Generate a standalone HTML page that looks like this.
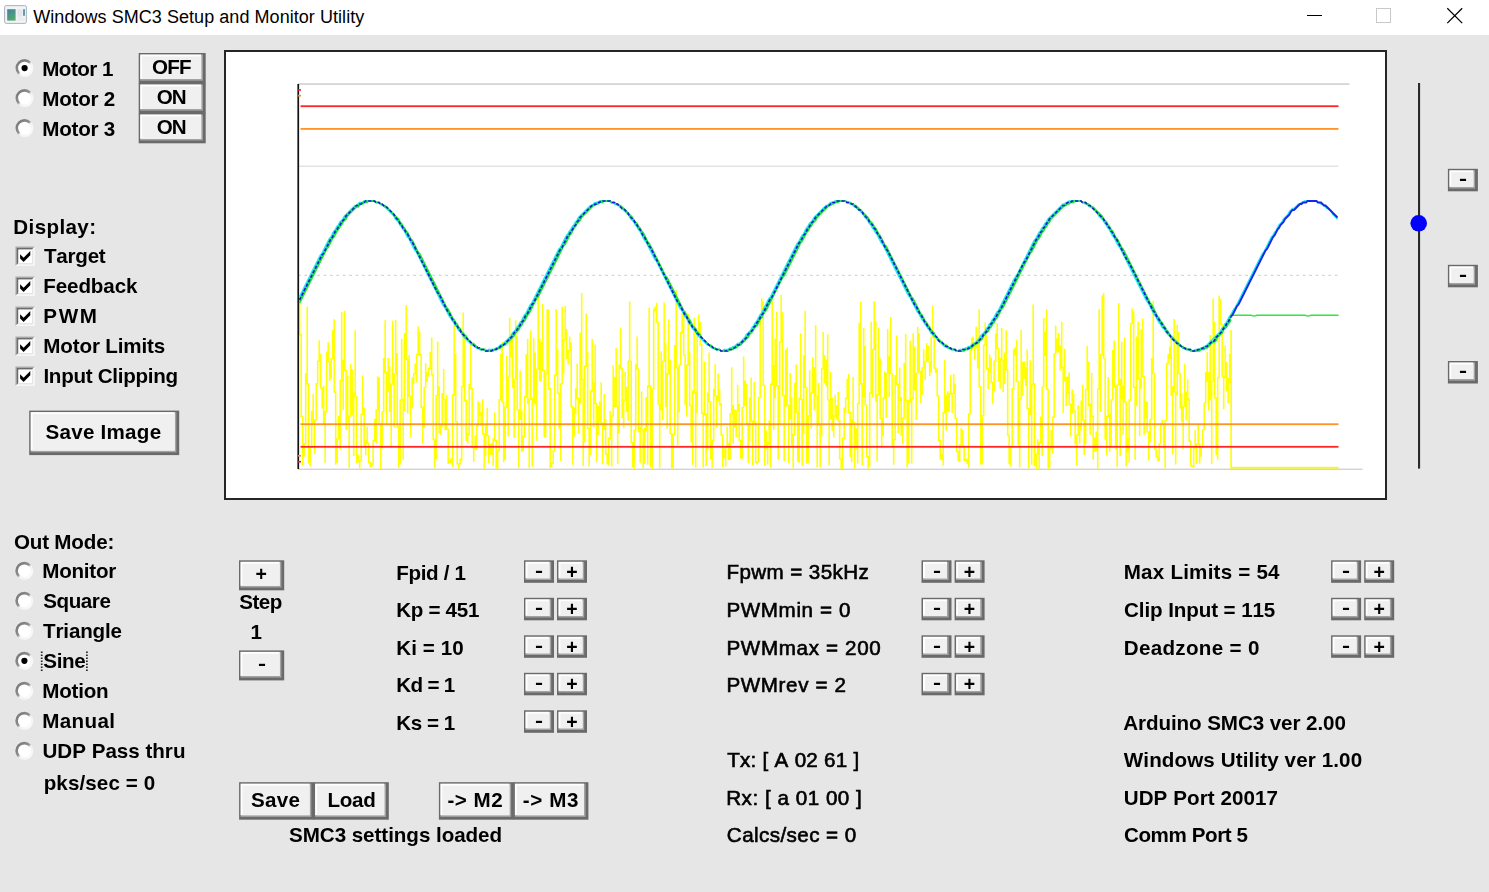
<!DOCTYPE html><html lang="en"><head><meta charset="utf-8"><title>Windows SMC3 Setup and Monitor Utility</title><style>
html,body{margin:0;padding:0;}
body{width:1489px;height:892px;overflow:hidden;background:#e6e6e6;position:relative;font-family:"Liberation Sans",sans-serif;color:#000;}
#titlebar{position:absolute;left:0;top:0;width:1489px;height:35px;background:#fff;z-index:2;}
#tgfx{position:absolute;left:0;top:0;}
#client{position:absolute;left:0;top:35px;width:1489px;height:857px;background:#e6e6e6;filter:blur(0.45px);}
#gfx{position:absolute;left:0;top:-35px;}
#txt{position:absolute;left:0;top:-35px;width:1489px;height:892px;}
.t{position:absolute;white-space:nowrap;line-height:24px;height:24px;font-kerning:none;margin:0;padding:0;}
.b{font-weight:bold;}
.r{font-weight:bold;}
.m{font-weight:normal;-webkit-text-stroke:0.62px #000;}
.tt{font-weight:normal;}
.g{position:absolute;font-weight:bold;font-size:19.5px;line-height:22px;height:22px;text-align:center;width:30px;}
.gm{font-size:21px;transform:scale(1.15,0.84);}
</style></head><body>
<div id="titlebar"><svg id="tgfx" width="1489" height="35" viewBox="0 0 1489 35"><defs><linearGradient id="ig" x1="0" y1="0" x2="0.6" y2="1"><stop offset="0" stop-color="#3f7fa8"/><stop offset="1" stop-color="#57a86a"/></linearGradient></defs><rect x="4.6" y="5.6" width="21.8" height="17.8" rx="1.6" fill="#f1f3f5" stroke="#a9b4c0" stroke-width="1"/><rect x="7.2" y="9.2" width="8.4" height="11.4" fill="url(#ig)"/><rect x="17.2" y="9.2" width="5" height="7.6" fill="#e4e6e8"/><rect x="17.2" y="17.6" width="7.4" height="3" fill="#e9ebed"/><rect x="23.2" y="9.2" width="1.6" height="6.6" fill="#3f86a0"/><rect x="1307" y="15" width="15" height="1" fill="#000"/><rect x="1376.5" y="8.5" width="14" height="14" fill="none" stroke="#c9c9c9" stroke-width="1"/><path d="M1447.3 8.2L1462.2 23.1M1462.2 8.2L1447.3 23.1" stroke="#000" stroke-width="1.25" fill="none"/></svg>
<div class="t tt" id="title" style="left:33.25px;top:4.61px;font-size:18px;letter-spacing:0.051px">Windows SMC3 Setup and Monitor Utility</div>
</div>
<div id="client">
<svg id="gfx" width="1489" height="892" viewBox="0 0 1489 892">
<defs><linearGradient id="rg" x1="0" y1="0" x2="1" y2="1"><stop offset="0" stop-color="#747474"/><stop offset="0.45" stop-color="#909090"/><stop offset="0.55" stop-color="#f2f2f2"/><stop offset="1" stop-color="#fcfcfc"/></linearGradient></defs>
<rect x="225" y="51" width="1161" height="448" fill="#fff" stroke="#262626" stroke-width="2"/>
<rect x="298" y="83.4" width="1051.5" height="1.3" fill="#c6c6c6"/>
<rect x="298" y="165.6" width="1040.5" height="1.2" fill="#dcdcdc"/>
<path d="M298 275.4H1338.5" stroke="#d4d4d4" stroke-width="1.2" stroke-dasharray="2.7 3.7" fill="none"/>
<rect x="298" y="468.6" width="1064.5" height="1.3" fill="#cfcfcf"/>
<path d="M298.90 300.0h1.55V335.4h-1.55zM300.40 334.0h1.55V417.3h-1.55zM301.90 415.9h1.55V465.1h-1.55zM303.40 443.1h1.55V456.5h-1.55zM304.90 373.2h1.55V444.5h-1.55zM306.40 306.7h1.55V384.5h-1.55zM307.90 383.1h1.55V463.6h-1.55zM309.40 446.6h1.55V466.3h-1.55zM310.90 411.1h1.55V448.0h-1.55zM312.40 394.0h1.55V424.7h-1.55zM313.90 419.0h1.55V454.1h-1.55zM315.40 383.1h1.55V420.4h-1.55zM316.90 360.5h1.55V384.5h-1.55zM318.40 340.2h1.55V361.9h-1.55zM319.90 353.8h1.55V388.7h-1.55zM321.40 387.3h1.55V408.5h-1.55zM322.90 385.7h1.55V424.9h-1.55zM324.40 411.0h1.55V462.7h-1.55zM325.90 351.4h1.55V412.4h-1.55zM327.40 342.3h1.55V362.4h-1.55zM328.90 361.0h1.55V381.1h-1.55zM330.40 357.9h1.55V378.8h-1.55zM331.90 330.0h1.55V359.3h-1.55zM333.40 319.3h1.55V392.7h-1.55zM334.90 391.3h1.55V464.8h-1.55zM336.40 438.2h1.55V463.3h-1.55zM337.90 416.1h1.55V439.6h-1.55zM339.40 379.9h1.55V449.1h-1.55zM340.90 312.1h1.55V381.3h-1.55zM342.40 359.7h1.55V410.1h-1.55zM343.90 310.7h1.55V371.0h-1.55zM345.40 369.6h1.55V430.0h-1.55zM346.90 375.9h1.55V422.5h-1.55zM348.40 415.3h1.55V467.8h-1.55zM349.90 364.1h1.55V416.7h-1.55zM351.40 368.9h1.55V415.6h-1.55zM352.90 392.4h1.55V456.0h-1.55zM354.40 330.2h1.55V397.3h-1.55zM355.90 395.9h1.55V463.1h-1.55zM357.40 454.4h1.55V462.6h-1.55zM358.90 459.8h1.55V469.4h-1.55zM360.40 413.6h1.55V461.2h-1.55zM361.90 375.6h1.55V415.0h-1.55zM363.40 407.4h1.55V447.9h-1.55zM364.90 440.3h1.55V455.3h-1.55zM366.40 426.7h1.55V443.9h-1.55zM367.90 442.5h1.55V463.5h-1.55zM369.40 462.1h1.55V467.2h-1.55zM370.90 463.3h1.55V466.9h-1.55zM372.40 440.1h1.55V464.7h-1.55zM373.90 418.8h1.55V441.5h-1.55zM375.40 409.2h1.55V443.6h-1.55zM376.90 376.2h1.55V410.6h-1.55zM378.40 377.2h1.55V424.3h-1.55zM379.90 422.9h1.55V469.1h-1.55zM381.40 411.2h1.55V448.4h-1.55zM382.90 358.1h1.55V412.6h-1.55zM384.40 320.2h1.55V373.0h-1.55zM385.90 371.6h1.55V424.3h-1.55zM387.40 358.1h1.55V391.9h-1.55zM388.90 366.6h1.55V411.9h-1.55zM390.40 383.4h1.55V447.4h-1.55zM391.90 320.8h1.55V384.8h-1.55zM393.40 373.0h1.55V427.6h-1.55zM394.90 319.7h1.55V374.4h-1.55zM396.40 352.9h1.55V427.7h-1.55zM397.90 426.3h1.55V467.9h-1.55zM399.40 399.3h1.55V464.5h-1.55zM400.90 338.8h1.55V400.7h-1.55zM402.40 398.5h1.55V459.7h-1.55zM403.90 333.0h1.55V411.1h-1.55zM405.40 304.9h1.55V359.9h-1.55zM406.90 358.5h1.55V413.5h-1.55zM408.40 354.7h1.55V397.0h-1.55zM409.90 395.6h1.55V437.8h-1.55zM411.40 377.2h1.55V408.2h-1.55zM412.90 373.0h1.55V383.7h-1.55zM414.40 363.6h1.55V374.4h-1.55zM415.90 353.7h1.55V382.4h-1.55zM417.40 326.4h1.55V355.1h-1.55zM418.90 332.0h1.55V355.5h-1.55zM420.40 354.1h1.55V407.9h-1.55zM421.90 406.5h1.55V443.8h-1.55zM423.40 386.9h1.55V427.9h-1.55zM424.90 363.2h1.55V388.3h-1.55zM426.40 371.9h1.55V382.1h-1.55zM427.90 367.7h1.55V376.4h-1.55zM429.40 351.7h1.55V369.1h-1.55zM430.90 337.4h1.55V375.5h-1.55zM432.40 374.1h1.55V440.2h-1.55zM433.90 438.8h1.55V468.2h-1.55zM435.40 394.9h1.55V459.0h-1.55zM436.90 341.4h1.55V396.3h-1.55zM438.40 386.2h1.55V433.6h-1.55zM439.90 425.3h1.55V434.7h-1.55zM441.40 393.1h1.55V426.7h-1.55zM442.90 368.9h1.55V400.3h-1.55zM444.40 398.9h1.55V430.3h-1.55zM445.90 394.7h1.55V430.0h-1.55zM447.40 428.6h1.55V463.9h-1.55zM448.90 460.1h1.55V463.6h-1.55zM450.40 458.1h1.55V463.1h-1.55zM451.90 394.3h1.55V466.7h-1.55zM453.40 323.3h1.55V395.7h-1.55zM454.90 353.4h1.55V422.5h-1.55zM456.40 421.1h1.55V464.5h-1.55zM457.90 463.0h1.55V468.8h-1.55zM459.40 458.6h1.55V464.4h-1.55zM460.90 385.9h1.55V460.8h-1.55zM462.40 312.4h1.55V387.3h-1.55zM463.90 337.3h1.55V401.3h-1.55zM465.40 399.9h1.55V441.1h-1.55zM466.90 433.5h1.55V443.2h-1.55zM468.40 383.7h1.55V434.9h-1.55zM469.90 342.3h1.55V389.0h-1.55zM471.40 387.6h1.55V448.2h-1.55zM472.90 446.8h1.55V462.1h-1.55zM474.40 435.3h1.55V449.4h-1.55zM475.90 424.8h1.55V450.0h-1.55zM477.40 400.9h1.55V426.2h-1.55zM478.90 402.7h1.55V415.9h-1.55zM480.40 411.9h1.55V425.8h-1.55zM481.90 399.3h1.55V434.7h-1.55zM483.40 433.3h1.55V468.7h-1.55zM484.90 424.9h1.55V456.0h-1.55zM486.40 407.7h1.55V436.1h-1.55zM487.90 434.7h1.55V463.0h-1.55zM489.40 444.1h1.55V454.7h-1.55zM490.90 443.2h1.55V455.1h-1.55zM492.40 438.3h1.55V465.6h-1.55zM493.90 412.5h1.55V441.1h-1.55zM495.40 439.7h1.55V468.7h-1.55zM496.90 450.2h1.55V469.2h-1.55zM498.40 399.1h1.55V451.6h-1.55zM499.90 353.8h1.55V400.5h-1.55zM501.40 342.0h1.55V402.8h-1.55zM502.90 401.4h1.55V462.2h-1.55zM504.40 406.5h1.55V460.3h-1.55zM505.90 355.9h1.55V407.9h-1.55zM507.40 376.5h1.55V436.6h-1.55zM508.90 317.7h1.55V377.9h-1.55zM510.40 336.7h1.55V357.1h-1.55zM511.90 337.3h1.55V388.3h-1.55zM513.40 378.4h1.55V437.9h-1.55zM514.90 320.3h1.55V379.8h-1.55zM516.40 336.0h1.55V410.6h-1.55zM517.90 409.2h1.55V468.0h-1.55zM519.40 370.5h1.55V420.0h-1.55zM520.90 410.5h1.55V451.9h-1.55zM522.40 435.6h1.55V451.1h-1.55zM523.90 396.0h1.55V437.0h-1.55zM525.40 354.3h1.55V397.4h-1.55zM526.90 338.9h1.55V404.1h-1.55zM528.40 398.6h1.55V467.9h-1.55zM529.90 330.6h1.55V400.0h-1.55zM531.40 398.0h1.55V466.7h-1.55zM532.90 337.7h1.55V402.9h-1.55zM534.40 352.6h1.55V404.8h-1.55zM535.90 368.4h1.55V440.7h-1.55zM537.40 297.5h1.55V369.8h-1.55zM538.90 338.8h1.55V381.5h-1.55zM540.40 342.0h1.55V381.4h-1.55zM541.90 304.1h1.55V371.1h-1.55zM543.40 369.7h1.55V437.2h-1.55zM544.90 372.9h1.55V437.8h-1.55zM546.40 309.3h1.55V374.3h-1.55zM547.90 309.4h1.55V389.4h-1.55zM549.40 388.0h1.55V468.0h-1.55zM550.90 462.5h1.55V467.0h-1.55zM552.40 450.1h1.55V463.9h-1.55zM553.90 374.3h1.55V451.5h-1.55zM555.40 309.0h1.55V375.7h-1.55zM556.90 349.4h1.55V393.9h-1.55zM558.40 392.5h1.55V428.8h-1.55zM559.90 383.2h1.55V461.1h-1.55zM561.40 306.8h1.55V384.6h-1.55zM562.90 339.0h1.55V373.8h-1.55zM564.40 305.7h1.55V340.4h-1.55zM565.90 329.0h1.55V359.1h-1.55zM567.40 349.9h1.55V364.6h-1.55zM568.90 336.5h1.55V351.3h-1.55zM570.40 342.6h1.55V407.4h-1.55zM571.90 406.0h1.55V464.7h-1.55zM573.40 407.5h1.55V436.8h-1.55zM574.90 388.2h1.55V414.3h-1.55zM576.40 363.6h1.55V399.2h-1.55zM577.90 397.8h1.55V433.4h-1.55zM579.40 332.8h1.55V403.7h-1.55zM580.90 292.9h1.55V380.2h-1.55zM582.40 378.8h1.55V466.0h-1.55zM583.90 365.6h1.55V442.5h-1.55zM585.40 313.6h1.55V367.0h-1.55zM586.90 351.9h1.55V429.1h-1.55zM588.40 427.7h1.55V466.6h-1.55zM589.90 390.3h1.55V454.9h-1.55zM591.40 338.9h1.55V391.7h-1.55zM592.90 382.5h1.55V427.5h-1.55zM594.40 344.6h1.55V404.2h-1.55zM595.90 402.8h1.55V462.3h-1.55zM597.40 406.0h1.55V434.9h-1.55zM598.90 401.6h1.55V422.3h-1.55zM600.40 382.3h1.55V424.0h-1.55zM601.90 422.6h1.55V464.2h-1.55zM603.40 393.9h1.55V429.7h-1.55zM604.90 419.0h1.55V454.7h-1.55zM606.40 453.3h1.55V464.6h-1.55zM607.90 437.5h1.55V465.4h-1.55zM609.40 411.0h1.55V439.4h-1.55zM610.90 415.2h1.55V466.4h-1.55zM612.40 365.5h1.55V416.6h-1.55zM613.90 376.7h1.55V406.9h-1.55zM615.40 347.9h1.55V406.8h-1.55zM616.90 405.4h1.55V464.3h-1.55zM618.40 364.4h1.55V433.2h-1.55zM619.90 328.0h1.55V368.8h-1.55zM621.40 367.4h1.55V418.2h-1.55zM622.90 399.4h1.55V428.3h-1.55zM624.40 371.9h1.55V400.8h-1.55zM625.90 387.0h1.55V412.1h-1.55zM627.40 360.4h1.55V420.7h-1.55zM628.90 301.4h1.55V362.1h-1.55zM630.40 360.7h1.55V443.4h-1.55zM631.90 442.0h1.55V467.2h-1.55zM633.40 429.7h1.55V468.9h-1.55zM634.90 364.3h1.55V431.1h-1.55zM636.40 336.6h1.55V369.8h-1.55zM637.90 368.4h1.55V432.2h-1.55zM639.40 426.5h1.55V462.8h-1.55zM640.90 391.6h1.55V430.6h-1.55zM642.40 429.2h1.55V468.2h-1.55zM643.90 427.6h1.55V464.0h-1.55zM645.40 396.9h1.55V431.5h-1.55zM646.90 385.3h1.55V464.7h-1.55zM648.40 307.4h1.55V387.0h-1.55zM649.90 385.6h1.55V467.2h-1.55zM651.40 388.2h1.55V469.1h-1.55zM652.90 308.7h1.55V389.6h-1.55zM654.40 306.5h1.55V311.5h-1.55zM655.90 302.8h1.55V322.8h-1.55zM657.40 321.4h1.55V404.7h-1.55zM658.90 403.3h1.55V467.9h-1.55zM660.40 351.3h1.55V410.3h-1.55zM661.90 360.7h1.55V420.3h-1.55zM663.40 302.5h1.55V362.1h-1.55zM664.90 343.6h1.55V407.2h-1.55zM666.40 373.1h1.55V428.4h-1.55zM667.90 319.3h1.55V374.5h-1.55zM669.40 359.5h1.55V434.3h-1.55zM670.90 432.9h1.55V468.2h-1.55zM672.40 433.7h1.55V469.1h-1.55zM673.90 345.1h1.55V435.1h-1.55zM675.40 290.4h1.55V368.6h-1.55zM676.90 367.2h1.55V445.3h-1.55zM678.40 364.4h1.55V412.6h-1.55zM679.90 331.8h1.55V365.8h-1.55zM681.40 313.3h1.55V333.2h-1.55zM682.90 315.0h1.55V355.8h-1.55zM684.40 354.4h1.55V405.0h-1.55zM685.90 364.5h1.55V416.5h-1.55zM687.40 314.0h1.55V365.9h-1.55zM688.90 352.3h1.55V406.2h-1.55zM690.40 404.8h1.55V442.5h-1.55zM691.90 390.5h1.55V464.7h-1.55zM693.40 317.8h1.55V393.4h-1.55zM694.90 392.0h1.55V467.5h-1.55zM696.40 336.1h1.55V413.3h-1.55zM697.90 314.5h1.55V337.5h-1.55zM699.40 321.9h1.55V345.5h-1.55zM700.90 344.1h1.55V413.9h-1.55zM702.40 412.5h1.55V467.4h-1.55zM703.90 362.1h1.55V415.4h-1.55zM705.40 413.3h1.55V465.9h-1.55zM706.90 392.4h1.55V449.9h-1.55zM708.40 352.5h1.55V402.3h-1.55zM709.90 400.9h1.55V459.3h-1.55zM711.40 439.7h1.55V467.8h-1.55zM712.90 388.7h1.55V441.1h-1.55zM714.40 364.3h1.55V396.6h-1.55zM715.90 395.2h1.55V427.5h-1.55zM717.40 373.6h1.55V401.3h-1.55zM718.90 388.9h1.55V405.5h-1.55zM720.40 402.9h1.55V435.6h-1.55zM721.90 434.2h1.55V467.0h-1.55zM723.40 448.6h1.55V458.5h-1.55zM724.90 446.0h1.55V466.6h-1.55zM726.40 426.8h1.55V447.4h-1.55zM727.90 442.7h1.55V460.1h-1.55zM729.40 413.0h1.55V460.1h-1.55zM730.90 367.2h1.55V414.4h-1.55zM732.40 404.8h1.55V443.9h-1.55zM733.90 409.0h1.55V427.2h-1.55zM735.40 410.3h1.55V436.9h-1.55zM736.90 385.1h1.55V411.7h-1.55zM738.40 403.7h1.55V441.2h-1.55zM739.90 439.8h1.55V458.8h-1.55zM741.40 406.9h1.55V458.8h-1.55zM742.90 356.4h1.55V408.3h-1.55zM744.40 380.5h1.55V406.0h-1.55zM745.90 383.8h1.55V424.2h-1.55zM747.40 422.8h1.55V463.2h-1.55zM748.90 397.4h1.55V440.9h-1.55zM750.40 377.5h1.55V422.0h-1.55zM751.90 420.6h1.55V465.1h-1.55zM753.40 381.9h1.55V424.2h-1.55zM754.90 421.3h1.55V463.2h-1.55zM756.40 461.2h1.55V464.4h-1.55zM757.90 396.8h1.55V462.6h-1.55zM759.40 316.2h1.55V398.2h-1.55zM760.90 298.3h1.55V317.6h-1.55zM762.40 301.6h1.55V386.1h-1.55zM763.90 384.7h1.55V465.9h-1.55zM765.40 430.5h1.55V448.9h-1.55zM766.90 441.8h1.55V464.4h-1.55zM768.40 420.6h1.55V444.8h-1.55zM769.90 383.5h1.55V467.6h-1.55zM771.40 300.8h1.55V384.9h-1.55zM772.90 364.7h1.55V429.9h-1.55zM774.40 338.5h1.55V398.2h-1.55zM775.90 312.0h1.55V386.4h-1.55zM777.40 385.0h1.55V459.5h-1.55zM778.90 341.4h1.55V424.4h-1.55zM780.40 294.8h1.55V342.8h-1.55zM781.90 312.3h1.55V396.2h-1.55zM783.40 394.8h1.55V461.2h-1.55zM784.90 349.7h1.55V407.3h-1.55zM786.40 347.5h1.55V406.1h-1.55zM787.90 404.7h1.55V463.2h-1.55zM789.40 373.1h1.55V418.9h-1.55zM790.90 397.1h1.55V445.4h-1.55zM792.40 434.0h1.55V468.4h-1.55zM793.90 382.8h1.55V435.4h-1.55zM795.40 364.6h1.55V413.0h-1.55zM796.90 411.6h1.55V461.5h-1.55zM798.40 397.4h1.55V463.0h-1.55zM799.90 333.2h1.55V400.1h-1.55zM801.40 398.7h1.55V465.7h-1.55zM802.90 355.3h1.55V433.5h-1.55zM804.40 310.7h1.55V388.1h-1.55zM805.90 386.7h1.55V464.1h-1.55zM807.40 415.2h1.55V462.8h-1.55zM808.90 370.3h1.55V416.6h-1.55zM810.40 392.2h1.55V428.6h-1.55zM811.90 357.2h1.55V393.6h-1.55zM813.40 367.0h1.55V410.3h-1.55zM814.90 325.0h1.55V396.8h-1.55zM816.40 395.4h1.55V467.2h-1.55zM817.90 382.8h1.55V425.7h-1.55zM819.40 424.2h1.55V467.1h-1.55zM820.90 368.2h1.55V436.4h-1.55zM822.40 332.1h1.55V369.6h-1.55zM823.90 355.1h1.55V383.0h-1.55zM825.40 359.7h1.55V386.4h-1.55zM826.90 334.3h1.55V400.6h-1.55zM828.40 399.2h1.55V465.6h-1.55zM829.90 372.1h1.55V419.5h-1.55zM831.40 397.4h1.55V430.8h-1.55zM832.90 415.4h1.55V437.5h-1.55zM834.40 394.7h1.55V416.8h-1.55zM835.90 405.1h1.55V419.6h-1.55zM837.40 392.0h1.55V421.7h-1.55zM838.90 420.3h1.55V459.5h-1.55zM840.40 458.1h1.55V469.1h-1.55zM841.90 437.5h1.55V469.1h-1.55zM843.40 407.5h1.55V438.9h-1.55zM844.90 397.3h1.55V412.7h-1.55zM846.40 378.7h1.55V398.7h-1.55zM847.90 374.0h1.55V413.5h-1.55zM849.40 412.1h1.55V457.0h-1.55zM850.90 418.9h1.55V462.3h-1.55zM852.40 376.8h1.55V423.3h-1.55zM853.90 421.9h1.55V468.4h-1.55zM855.40 428.3h1.55V449.1h-1.55zM856.90 402.8h1.55V463.4h-1.55zM858.40 322.8h1.55V404.2h-1.55zM859.90 302.1h1.55V384.4h-1.55zM861.40 383.0h1.55V465.3h-1.55zM862.90 327.7h1.55V397.2h-1.55zM864.40 345.9h1.55V405.8h-1.55zM865.90 404.4h1.55V457.5h-1.55zM867.40 456.1h1.55V468.8h-1.55zM868.90 392.5h1.55V466.6h-1.55zM870.40 321.9h1.55V393.9h-1.55zM871.90 348.7h1.55V397.4h-1.55zM873.40 301.3h1.55V350.1h-1.55zM874.90 320.8h1.55V401.6h-1.55zM876.40 393.9h1.55V461.5h-1.55zM877.90 327.7h1.55V395.3h-1.55zM879.40 358.5h1.55V419.2h-1.55zM880.90 417.8h1.55V447.7h-1.55zM882.40 397.4h1.55V436.3h-1.55zM883.90 371.4h1.55V398.8h-1.55zM885.40 372.9h1.55V418.1h-1.55zM886.90 329.1h1.55V374.3h-1.55zM888.40 356.2h1.55V397.0h-1.55zM889.90 316.9h1.55V374.3h-1.55zM891.40 372.9h1.55V447.6h-1.55zM892.90 439.1h1.55V464.8h-1.55zM894.40 375.1h1.55V440.5h-1.55zM895.90 335.6h1.55V385.0h-1.55zM897.40 383.6h1.55V433.1h-1.55zM898.90 367.5h1.55V401.0h-1.55zM900.40 396.7h1.55V435.8h-1.55zM901.90 417.3h1.55V444.3h-1.55zM903.40 362.9h1.55V418.7h-1.55zM904.90 334.1h1.55V401.4h-1.55zM906.40 400.0h1.55V467.3h-1.55zM907.90 399.5h1.55V463.5h-1.55zM909.40 340.7h1.55V402.7h-1.55zM910.90 397.6h1.55V463.4h-1.55zM912.40 333.2h1.55V399.0h-1.55zM913.90 346.5h1.55V390.6h-1.55zM915.40 372.7h1.55V420.1h-1.55zM916.90 326.7h1.55V374.1h-1.55zM918.40 333.2h1.55V372.2h-1.55zM919.90 370.8h1.55V403.3h-1.55zM921.40 367.0h1.55V394.7h-1.55zM922.90 349.3h1.55V368.4h-1.55zM924.40 360.7h1.55V379.7h-1.55zM925.90 343.0h1.55V362.1h-1.55zM927.40 345.5h1.55V362.6h-1.55zM928.90 361.2h1.55V375.9h-1.55zM930.40 336.7h1.55V372.5h-1.55zM931.90 305.8h1.55V338.1h-1.55zM933.40 334.4h1.55V368.7h-1.55zM934.90 367.3h1.55V373.0h-1.55zM936.40 368.6h1.55V396.4h-1.55zM937.90 395.0h1.55V441.1h-1.55zM939.40 439.7h1.55V459.6h-1.55zM940.90 453.8h1.55V460.3h-1.55zM942.40 411.9h1.55V465.5h-1.55zM943.90 359.7h1.55V413.3h-1.55zM945.40 394.5h1.55V430.7h-1.55zM946.90 390.9h1.55V411.5h-1.55zM948.40 392.8h1.55V412.2h-1.55zM949.90 374.8h1.55V394.5h-1.55zM951.40 392.7h1.55V412.7h-1.55zM952.90 374.0h1.55V394.1h-1.55zM954.40 383.6h1.55V419.3h-1.55zM955.90 417.9h1.55V452.2h-1.55zM957.40 450.8h1.55V461.2h-1.55zM958.90 444.3h1.55V462.2h-1.55zM960.40 427.9h1.55V445.7h-1.55zM961.90 429.8h1.55V447.0h-1.55zM963.40 445.6h1.55V461.0h-1.55zM964.90 459.1h1.55V461.1h-1.55zM966.40 458.5h1.55V463.9h-1.55zM967.90 413.2h1.55V468.0h-1.55zM969.40 349.8h1.55V414.6h-1.55zM970.90 338.1h1.55V351.2h-1.55zM972.40 336.4h1.55V348.6h-1.55zM973.90 342.3h1.55V359.4h-1.55zM975.40 326.5h1.55V348.2h-1.55zM976.90 338.2h1.55V368.6h-1.55zM978.40 309.2h1.55V387.5h-1.55zM979.90 386.1h1.55V464.5h-1.55zM981.40 414.7h1.55V464.5h-1.55zM982.90 344.5h1.55V416.1h-1.55zM984.40 322.6h1.55V345.9h-1.55zM985.90 335.4h1.55V369.3h-1.55zM987.40 367.9h1.55V388.9h-1.55zM988.90 354.7h1.55V372.5h-1.55zM990.40 357.7h1.55V383.1h-1.55zM991.90 381.7h1.55V404.2h-1.55zM993.40 360.5h1.55V391.5h-1.55zM994.90 333.3h1.55V361.9h-1.55zM996.40 323.1h1.55V349.2h-1.55zM997.90 347.8h1.55V381.4h-1.55zM999.40 357.7h1.55V388.8h-1.55zM1000.90 328.0h1.55V360.6h-1.55zM1002.40 359.2h1.55V391.9h-1.55zM1003.90 352.4h1.55V384.0h-1.55zM1005.40 330.2h1.55V370.5h-1.55zM1006.90 369.1h1.55V435.8h-1.55zM1008.40 434.4h1.55V464.3h-1.55zM1009.90 446.0h1.55V466.4h-1.55zM1011.40 388.1h1.55V447.4h-1.55zM1012.90 349.2h1.55V389.5h-1.55zM1014.40 347.3h1.55V355.7h-1.55zM1015.90 340.3h1.55V382.1h-1.55zM1017.40 380.7h1.55V445.0h-1.55zM1018.90 398.1h1.55V467.6h-1.55zM1020.40 330.1h1.55V399.5h-1.55zM1021.90 362.1h1.55V395.5h-1.55zM1023.40 360.9h1.55V378.9h-1.55zM1024.90 367.1h1.55V386.2h-1.55zM1026.40 349.4h1.55V409.5h-1.55zM1027.90 408.1h1.55V468.2h-1.55zM1029.40 360.3h1.55V415.0h-1.55zM1030.90 383.9h1.55V464.8h-1.55zM1032.40 304.4h1.55V385.3h-1.55zM1033.90 383.0h1.55V466.2h-1.55zM1035.40 453.6h1.55V469.4h-1.55zM1036.90 439.2h1.55V455.0h-1.55zM1038.40 442.2h1.55V469.2h-1.55zM1039.90 416.6h1.55V443.6h-1.55zM1041.40 386.4h1.55V456.1h-1.55zM1042.90 318.1h1.55V387.8h-1.55zM1044.40 331.8h1.55V355.8h-1.55zM1045.90 309.2h1.55V389.9h-1.55zM1047.40 388.5h1.55V469.3h-1.55zM1048.90 447.4h1.55V467.8h-1.55zM1050.40 430.0h1.55V448.8h-1.55zM1051.90 416.5h1.55V453.4h-1.55zM1053.40 353.2h1.55V417.9h-1.55zM1054.90 325.5h1.55V354.6h-1.55zM1056.40 338.2h1.55V352.4h-1.55zM1057.90 333.1h1.55V352.5h-1.55zM1059.40 345.5h1.55V370.5h-1.55zM1060.90 321.8h1.55V368.0h-1.55zM1062.40 366.6h1.55V412.9h-1.55zM1063.90 348.7h1.55V381.5h-1.55zM1065.40 376.7h1.55V406.2h-1.55zM1066.90 376.5h1.55V394.1h-1.55zM1068.40 372.4h1.55V405.2h-1.55zM1069.90 403.8h1.55V436.6h-1.55zM1071.40 389.2h1.55V413.6h-1.55zM1072.90 394.0h1.55V411.8h-1.55zM1074.40 410.4h1.55V444.3h-1.55zM1075.90 434.4h1.55V465.0h-1.55zM1077.40 405.3h1.55V435.8h-1.55zM1078.90 423.7h1.55V443.5h-1.55zM1080.40 400.5h1.55V430.6h-1.55zM1081.90 384.8h1.55V420.6h-1.55zM1083.40 419.2h1.55V455.0h-1.55zM1084.90 388.9h1.55V444.1h-1.55zM1086.40 346.0h1.55V390.3h-1.55zM1087.90 361.5h1.55V406.6h-1.55zM1089.40 403.2h1.55V434.8h-1.55zM1090.90 373.0h1.55V416.9h-1.55zM1092.40 415.5h1.55V459.4h-1.55zM1093.90 437.2h1.55V451.9h-1.55zM1095.40 431.4h1.55V451.0h-1.55zM1096.90 388.4h1.55V469.1h-1.55zM1098.40 309.0h1.55V389.8h-1.55zM1099.90 353.9h1.55V411.9h-1.55zM1101.40 295.2h1.55V355.3h-1.55zM1102.90 292.9h1.55V359.2h-1.55zM1104.40 357.8h1.55V439.8h-1.55zM1105.90 415.6h1.55V455.5h-1.55zM1107.40 377.1h1.55V417.0h-1.55zM1108.90 413.9h1.55V452.0h-1.55zM1110.40 399.2h1.55V446.0h-1.55zM1111.90 350.1h1.55V400.6h-1.55zM1113.40 340.6h1.55V386.9h-1.55zM1114.90 385.5h1.55V449.4h-1.55zM1116.40 384.2h1.55V466.8h-1.55zM1117.90 303.0h1.55V385.6h-1.55zM1119.40 378.7h1.55V455.9h-1.55zM1120.90 341.8h1.55V399.5h-1.55zM1122.40 385.4h1.55V434.7h-1.55zM1123.90 337.5h1.55V402.5h-1.55zM1125.40 401.1h1.55V466.2h-1.55zM1126.90 437.5h1.55V452.5h-1.55zM1128.40 399.3h1.55V462.6h-1.55zM1129.90 322.9h1.55V400.7h-1.55zM1131.40 308.4h1.55V324.3h-1.55zM1132.90 311.4h1.55V388.0h-1.55zM1134.40 386.6h1.55V460.1h-1.55zM1135.90 336.4h1.55V406.3h-1.55zM1137.40 321.8h1.55V379.7h-1.55zM1138.90 378.3h1.55V436.2h-1.55zM1140.40 329.3h1.55V388.8h-1.55zM1141.90 318.5h1.55V377.4h-1.55zM1143.40 376.0h1.55V434.8h-1.55zM1144.90 400.7h1.55V418.5h-1.55zM1146.40 402.1h1.55V432.6h-1.55zM1147.90 431.2h1.55V460.4h-1.55zM1149.40 418.7h1.55V442.3h-1.55zM1150.90 357.9h1.55V420.1h-1.55zM1152.40 301.1h1.55V374.1h-1.55zM1153.90 372.7h1.55V449.8h-1.55zM1155.40 448.4h1.55V457.7h-1.55zM1156.90 456.3h1.55V461.3h-1.55zM1158.40 443.2h1.55V461.2h-1.55zM1159.90 423.3h1.55V444.6h-1.55zM1161.40 419.9h1.55V425.2h-1.55zM1162.90 423.8h1.55V448.8h-1.55zM1164.40 419.4h1.55V468.5h-1.55zM1165.90 362.8h1.55V420.8h-1.55zM1167.40 354.0h1.55V364.2h-1.55zM1168.90 346.6h1.55V358.7h-1.55zM1170.40 335.9h1.55V395.9h-1.55zM1171.90 386.0h1.55V454.6h-1.55zM1173.40 318.9h1.55V392.4h-1.55zM1174.90 391.0h1.55V464.5h-1.55zM1176.40 324.8h1.55V395.4h-1.55zM1177.90 331.8h1.55V374.2h-1.55zM1179.40 372.8h1.55V408.4h-1.55zM1180.90 393.1h1.55V421.7h-1.55zM1182.40 405.7h1.55V449.0h-1.55zM1183.90 363.8h1.55V407.1h-1.55zM1185.40 391.4h1.55V420.4h-1.55zM1186.90 379.2h1.55V400.5h-1.55zM1188.40 397.7h1.55V442.0h-1.55zM1189.90 440.6h1.55V466.6h-1.55zM1191.40 465.2h1.55V466.9h-1.55zM1192.90 447.7h1.55V466.9h-1.55zM1194.40 430.0h1.55V449.1h-1.55zM1195.90 443.3h1.55V464.0h-1.55zM1197.40 424.0h1.55V444.7h-1.55zM1198.90 443.0h1.55V463.5h-1.55zM1200.40 446.5h1.55V456.8h-1.55zM1201.90 428.9h1.55V447.9h-1.55zM1203.40 402.4h1.55V430.3h-1.55zM1204.90 371.8h1.55V403.8h-1.55zM1206.40 352.2h1.55V382.0h-1.55zM1207.90 372.0h1.55V410.5h-1.55zM1209.40 334.9h1.55V400.2h-1.55zM1210.90 380.7h1.55V464.2h-1.55zM1212.40 298.6h1.55V382.1h-1.55zM1213.90 321.7h1.55V398.4h-1.55zM1215.40 397.0h1.55V455.2h-1.55zM1216.90 376.8h1.55V459.7h-1.55zM1218.40 295.4h1.55V378.2h-1.55zM1219.90 298.8h1.55V324.8h-1.55zM1221.40 323.4h1.55V377.6h-1.55zM1222.90 376.2h1.55V409.3h-1.55zM1224.40 345.6h1.55V378.2h-1.55zM1225.90 361.9h1.55V391.5h-1.55zM1227.40 378.0h1.55V403.4h-1.55zM1228.90 353.9h1.55V383.3h-1.55zM1230.40 381.9h1.55V469.4h-1.55zM1230.30 330.0h1.6V468.5h-1.6z" fill="#ffff00"/>
<rect x="1231.0" y="466.8" width="107.5" height="2" fill="#f6f23a"/>
<rect x="300.5" y="105.3" width="1038" height="1.8" fill="#ff2626"/>
<rect x="300.5" y="445.90000000000003" width="1038" height="1.8" fill="#ff2626"/>
<rect x="300.5" y="128.0" width="1038" height="1.8" fill="#ff9326"/>
<rect x="300.5" y="423.3" width="1038" height="1.8" fill="#ff9326"/>
<rect x="297.4" y="84" width="1.7" height="385" fill="#111"/>
<rect x="298" y="89.2" width="3" height="1.6" fill="#e02020"/>
<rect x="298" y="94.9" width="3" height="1.6" fill="#f08a20"/>
<rect x="298" y="455.0" width="3" height="1.6" fill="#f08a20"/>
<rect x="298" y="460.9" width="3" height="1.6" fill="#e02020"/>
<path d="M299.5 297.0 301.0 294.0 302.5 291.0 304.0 288.0 305.5 285.0 307.0 282.0 308.5 279.0 310.0 276.0 311.5 273.0 313.0 270.0 314.5 267.0 316.0 264.0 317.5 261.0 319.0 258.0 320.5 255.0 322.0 253.5 323.5 250.5 325.0 247.5 326.5 244.5 328.0 241.5 329.5 238.5 331.0 237.0 332.5 234.0 334.0 231.0 335.5 229.5 337.0 226.5 338.5 225.0 340.0 222.0 341.5 220.5 343.0 219.0 344.5 216.0 346.0 214.5 347.5 213.0 349.0 211.5 350.5 210.0 352.0 208.5 353.5 207.0 355.0 205.5 356.5 205.5 358.0 204.0 359.5 202.5 361.0 202.5 362.5 202.5 364.0 201.0 365.5 201.0 367.0 201.0 368.5 201.0 370.0 201.0 371.5 201.0 373.0 201.0 374.5 201.0 376.0 202.5 377.5 202.5 379.0 202.5 380.5 204.0 382.0 205.5 383.5 205.5 385.0 207.0 386.5 208.5 388.0 210.0 389.5 211.5 391.0 213.0 392.5 214.5 394.0 216.0 395.5 219.0 397.0 220.5 398.5 222.0 400.0 225.0 401.5 226.5 403.0 229.5 404.5 231.0 406.0 234.0 407.5 237.0 409.0 238.5 410.5 241.5 412.0 244.5 413.5 247.5 415.0 250.5 416.5 252.0 418.0 255.0 419.5 258.0 421.0 261.0 422.5 264.0 424.0 267.0 425.5 270.0 427.0 273.0 428.5 276.0 430.0 279.0 431.5 282.0 433.0 285.0 434.5 288.0 436.0 291.0 437.5 294.0 439.0 297.0 440.5 300.0 442.0 303.0 443.5 306.0 445.0 307.5 446.5 310.5 448.0 313.5 449.5 316.5 451.0 318.0 452.5 321.0 454.0 322.5 455.5 325.5 457.0 327.0 458.5 330.0 460.0 331.5 461.5 333.0 463.0 336.0 464.5 337.5 466.0 339.0 467.5 340.5 469.0 342.0 470.5 343.5 472.0 345.0 473.5 345.0 475.0 346.5 476.5 348.0 478.0 348.0 479.5 349.5 481.0 349.5 482.5 349.5 484.0 349.5 485.5 349.5 487.0 351.0 488.5 349.5 490.0 349.5 491.5 349.5 493.0 349.5 494.5 349.5 496.0 348.0 497.5 348.0 499.0 346.5 500.5 345.0 502.0 345.0 503.5 343.5 505.0 342.0 506.5 340.5 508.0 339.0 509.5 337.5 511.0 336.0 512.5 333.0 514.0 331.5 515.5 330.0 517.0 327.0 518.5 325.5 520.0 322.5 521.5 321.0 523.0 318.0 524.5 315.0 526.0 313.5 527.5 310.5 529.0 307.5 530.5 304.5 532.0 303.0 533.5 300.0 535.0 297.0 536.5 294.0 538.0 291.0 539.5 288.0 541.0 285.0 542.5 282.0 544.0 279.0 545.5 276.0 547.0 273.0 548.5 270.0 550.0 267.0 551.5 264.0 553.0 261.0 554.5 258.0 556.0 255.0 557.5 252.0 559.0 249.0 560.5 247.5 562.0 244.5 563.5 241.5 565.0 238.5 566.5 235.5 568.0 234.0 569.5 231.0 571.0 229.5 572.5 226.5 574.0 225.0 575.5 222.0 577.0 220.5 578.5 217.5 580.0 216.0 581.5 214.5 583.0 213.0 584.5 211.5 586.0 210.0 587.5 208.5 589.0 207.0 590.5 205.5 592.0 205.5 593.5 204.0 595.0 202.5 596.5 202.5 598.0 202.5 599.5 201.0 601.0 201.0 602.5 201.0 604.0 201.0 605.5 201.0 607.0 201.0 608.5 201.0 610.0 201.0 611.5 202.5 613.0 202.5 614.5 204.0 616.0 204.0 617.5 205.5 619.0 205.5 620.5 207.0 622.0 208.5 623.5 210.0 625.0 211.5 626.5 213.0 628.0 214.5 629.5 216.0 631.0 219.0 632.5 220.5 634.0 222.0 635.5 225.0 637.0 226.5 638.5 229.5 640.0 231.0 641.5 234.0 643.0 237.0 644.5 240.0 646.0 241.5 647.5 244.5 649.0 247.5 650.5 250.5 652.0 253.5 653.5 256.5 655.0 259.5 656.5 261.0 658.0 264.0 659.5 267.0 661.0 270.0 662.5 273.0 664.0 276.0 665.5 279.0 667.0 282.0 668.5 285.0 670.0 288.0 671.5 291.0 673.0 294.0 674.5 297.0 676.0 300.0 677.5 303.0 679.0 306.0 680.5 309.0 682.0 310.5 683.5 313.5 685.0 316.5 686.5 318.0 688.0 321.0 689.5 324.0 691.0 325.5 692.5 328.5 694.0 330.0 695.5 331.5 697.0 334.5 698.5 336.0 700.0 337.5 701.5 339.0 703.0 340.5 704.5 342.0 706.0 343.5 707.5 345.0 709.0 345.0 710.5 346.5 712.0 348.0 713.5 348.0 715.0 349.5 716.5 349.5 718.0 349.5 719.5 349.5 721.0 351.0 722.5 351.0 724.0 349.5 725.5 349.5 727.0 349.5 728.5 349.5 730.0 348.0 731.5 348.0 733.0 346.5 734.5 346.5 736.0 345.0 737.5 343.5 739.0 343.5 740.5 342.0 742.0 340.5 743.5 339.0 745.0 337.5 746.5 334.5 748.0 333.0 749.5 331.5 751.0 330.0 752.5 327.0 754.0 325.5 755.5 322.5 757.0 321.0 758.5 318.0 760.0 315.0 761.5 313.5 763.0 310.5 764.5 307.5 766.0 304.5 767.5 301.5 769.0 298.5 770.5 297.0 772.0 294.0 773.5 291.0 775.0 288.0 776.5 285.0 778.0 282.0 779.5 279.0 781.0 276.0 782.5 273.0 784.0 270.0 785.5 267.0 787.0 264.0 788.5 261.0 790.0 258.0 791.5 255.0 793.0 252.0 794.5 249.0 796.0 246.0 797.5 243.0 799.0 241.5 800.5 238.5 802.0 235.5 803.5 234.0 805.0 231.0 806.5 228.0 808.0 226.5 809.5 223.5 811.0 222.0 812.5 220.5 814.0 217.5 815.5 216.0 817.0 214.5 818.5 213.0 820.0 211.5 821.5 210.0 823.0 208.5 824.5 207.0 826.0 205.5 827.5 205.5 829.0 204.0 830.5 202.5 832.0 202.5 833.5 202.5 835.0 201.0 836.5 201.0 838.0 201.0 839.5 201.0 841.0 201.0 842.5 201.0 844.0 201.0 845.5 201.0 847.0 202.5 848.5 202.5 850.0 204.0 851.5 204.0 853.0 205.5 854.5 207.0 856.0 207.0 857.5 208.5 859.0 210.0 860.5 211.5 862.0 213.0 863.5 214.5 865.0 217.5 866.5 219.0 868.0 220.5 869.5 223.5 871.0 225.0 872.5 228.0 874.0 229.5 875.5 232.5 877.0 234.0 878.5 237.0 880.0 240.0 881.5 243.0 883.0 244.5 884.5 247.5 886.0 250.5 887.5 253.5 889.0 256.5 890.5 259.5 892.0 262.5 893.5 265.5 895.0 268.5 896.5 271.5 898.0 274.5 899.5 277.5 901.0 280.5 902.5 283.5 904.0 286.5 905.5 289.5 907.0 292.5 908.5 295.5 910.0 297.0 911.5 300.0 913.0 303.0 914.5 306.0 916.0 309.0 917.5 312.0 919.0 313.5 920.5 316.5 922.0 319.5 923.5 321.0 925.0 324.0 926.5 325.5 928.0 328.5 929.5 330.0 931.0 333.0 932.5 334.5 934.0 336.0 935.5 337.5 937.0 339.0 938.5 340.5 940.0 342.0 941.5 343.5 943.0 345.0 944.5 346.5 946.0 346.5 947.5 348.0 949.0 348.0 950.5 349.5 952.0 349.5 953.5 349.5 955.0 349.5 956.5 351.0 958.0 351.0 959.5 349.5 961.0 349.5 962.5 349.5 964.0 349.5 965.5 348.0 967.0 348.0 968.5 346.5 970.0 346.5 971.5 345.0 973.0 343.5 974.5 343.5 976.0 342.0 977.5 340.5 979.0 339.0 980.5 336.0 982.0 334.5 983.5 333.0 985.0 331.5 986.5 328.5 988.0 327.0 989.5 324.0 991.0 322.5 992.5 319.5 994.0 318.0 995.5 315.0 997.0 312.0 998.5 310.5 1000.0 307.5 1001.5 304.5 1003.0 301.5 1004.5 298.5 1006.0 295.5 1007.5 292.5 1009.0 289.5 1010.5 286.5 1012.0 283.5 1013.5 280.5 1015.0 277.5 1016.5 276.0 1018.0 273.0 1019.5 270.0 1021.0 267.0 1022.5 264.0 1024.0 261.0 1025.5 258.0 1027.0 255.0 1028.5 252.0 1030.0 249.0 1031.5 246.0 1033.0 243.0 1034.5 240.0 1036.0 238.5 1037.5 235.5 1039.0 232.5 1040.5 231.0 1042.0 228.0 1043.5 226.5 1045.0 223.5 1046.5 222.0 1048.0 219.0 1049.5 217.5 1051.0 216.0 1052.5 214.5 1054.0 213.0 1055.5 211.5 1057.0 210.0 1058.5 208.5 1060.0 207.0 1061.5 205.5 1063.0 204.0 1064.5 204.0 1066.0 202.5 1067.5 202.5 1069.0 201.0 1070.5 201.0 1072.0 201.0 1073.5 201.0 1075.0 201.0 1076.5 201.0 1078.0 201.0 1079.5 201.0 1081.0 201.0 1082.5 202.5 1084.0 202.5 1085.5 204.0 1087.0 204.0 1088.5 205.5 1090.0 207.0 1091.5 207.0 1093.0 208.5 1094.5 210.0 1096.0 211.5 1097.5 213.0 1099.0 216.0 1100.5 217.5 1102.0 219.0 1103.5 220.5 1105.0 223.5 1106.5 225.0 1108.0 228.0 1109.5 229.5 1111.0 232.5 1112.5 235.5 1114.0 237.0 1115.5 240.0 1117.0 243.0 1118.5 246.0 1120.0 247.5 1121.5 250.5 1123.0 253.5 1124.5 256.5 1126.0 259.5 1127.5 262.5 1129.0 265.5 1130.5 268.5 1132.0 271.5 1133.5 274.5 1135.0 277.5 1136.5 280.5 1138.0 283.5 1139.5 286.5 1141.0 289.5 1142.5 292.5 1144.0 295.5 1145.5 298.5 1147.0 301.5 1148.5 303.0 1150.0 306.0 1151.5 309.0 1153.0 312.0 1154.5 315.0 1156.0 316.5 1157.5 319.5 1159.0 322.5 1160.5 324.0 1162.0 327.0 1163.5 328.5 1165.0 330.0 1166.5 333.0 1168.0 334.5 1169.5 336.0 1171.0 337.5 1172.5 339.0 1174.0 340.5 1175.5 342.0 1177.0 343.5 1178.5 345.0 1180.0 346.5 1181.5 346.5 1183.0 348.0 1184.5 348.0 1186.0 349.5 1187.5 349.5 1189.0 349.5 1190.5 349.5 1192.0 351.0 1193.5 351.0 1195.0 349.5 1196.5 349.5 1198.0 349.5 1199.5 349.5 1201.0 348.0 1202.5 348.0 1204.0 346.5 1205.5 346.5 1207.0 345.0 1208.5 343.5 1210.0 342.0 1211.5 340.5 1213.0 339.0 1214.5 337.5 1216.0 336.0 1217.5 334.5 1219.0 333.0 1220.5 331.5 1222.0 328.5 1223.5 327.0 1225.0 324.0 1226.5 322.5 1228.0 319.5 1229.5 316.5 1231.0 315.0 1232.5 312.0 1234.0 309.0 1235.5 307.5 1237.0 304.5 1238.5 301.5 1240.0 298.5 1241.5 295.5 1243.0 292.5 1244.5 289.5 1246.0 286.5 1247.5 283.5 1249.0 280.5 1250.5 277.5 1252.0 274.5 1253.5 271.5 1255.0 268.5 1256.5 265.5 1258.0 262.5 1259.5 259.5 1261.0 256.5 1262.5 253.5 1264.0 252.0 1265.5 249.0 1267.0 246.0 1268.5 243.0 1270.0 240.0 1271.5 237.0 1273.0 235.5 1274.5 232.5 1276.0 231.0 1277.5 228.0 1279.0 225.0 1280.5 223.5 1282.0 222.0 1283.5 219.0 1285.0 217.5 1286.5 216.0 1288.0 214.5 1289.5 211.5 1291.0 210.0 1292.5 208.5 1294.0 208.5 1295.5 207.0 1297.0 205.5 1298.5 204.0 1300.0 204.0 1301.5 202.5 1303.0 202.5 1304.5 201.0 1306.0 201.0 1307.5 201.0 1309.0 201.0 1310.5 201.0 1312.0 201.0 1313.5 201.0 1315.0 201.0 1316.5 201.0 1318.0 202.5 1319.5 202.5 1321.0 204.0 1322.5 204.0 1324.0 205.5 1325.5 207.0 1327.0 208.5 1328.5 208.5 1330.0 210.0 1331.5 211.5 1333.0 214.5 1334.5 216.0 1336.0 217.5 1337.5 219.0" fill="none" stroke="#20e8f4" stroke-width="1.7"/>
<path d="M299.5 303.0 301.0 300.0 302.5 297.0 304.0 294.0 305.5 291.0 307.0 288.0 308.5 285.0 310.0 282.0 311.5 279.0 313.0 276.0 314.5 273.0 316.0 270.0 317.5 267.0 319.0 264.0 320.5 261.0 322.0 258.0 323.5 255.0 325.0 252.0 326.5 249.0 328.0 247.5 329.5 244.5 331.0 241.5 332.5 238.5 334.0 237.0 335.5 234.0 337.0 231.0 338.5 229.5 340.0 226.5 341.5 225.0 343.0 222.0 344.5 220.5 346.0 219.0 347.5 216.0 349.0 214.5 350.5 213.0 352.0 211.5 353.5 210.0 355.0 208.5 356.5 207.0 358.0 207.0 359.5 205.5 361.0 204.0 362.5 204.0 364.0 202.5 365.5 202.5 367.0 202.5 368.5 201.0 370.0 201.0 371.5 201.0 373.0 201.0 374.5 201.0 376.0 202.5 377.5 202.5 379.0 202.5 380.5 204.0 382.0 204.0 383.5 205.5 385.0 205.5 386.5 207.0 388.0 208.5 389.5 210.0 391.0 211.5 392.5 213.0 394.0 214.5 395.5 216.0 397.0 217.5 398.5 219.0 400.0 222.0 401.5 223.5 403.0 226.5 404.5 228.0 406.0 231.0 407.5 232.5 409.0 235.5 410.5 238.5 412.0 240.0 413.5 243.0 415.0 246.0 416.5 249.0 418.0 252.0 419.5 253.5 421.0 256.5 422.5 259.5 424.0 262.5 425.5 265.5 427.0 268.5 428.5 271.5 430.0 274.5 431.5 277.5 433.0 280.5 434.5 283.5 436.0 286.5 437.5 289.5 439.0 292.5 440.5 295.5 442.0 298.5 443.5 301.5 445.0 304.5 446.5 307.5 448.0 309.0 449.5 312.0 451.0 315.0 452.5 318.0 454.0 319.5 455.5 322.5 457.0 324.0 458.5 327.0 460.0 328.5 461.5 331.5 463.0 333.0 464.5 334.5 466.0 336.0 467.5 339.0 469.0 340.5 470.5 342.0 472.0 343.5 473.5 343.5 475.0 345.0 476.5 346.5 478.0 348.0 479.5 348.0 481.0 349.5 482.5 349.5 484.0 349.5 485.5 351.0 487.0 351.0 488.5 351.0 490.0 351.0 491.5 351.0 493.0 351.0 494.5 349.5 496.0 349.5 497.5 349.5 499.0 348.0 500.5 348.0 502.0 346.5 503.5 345.0 505.0 345.0 506.5 343.5 508.0 342.0 509.5 340.5 511.0 339.0 512.5 337.5 514.0 336.0 515.5 333.0 517.0 331.5 518.5 330.0 520.0 327.0 521.5 325.5 523.0 322.5 524.5 321.0 526.0 318.0 527.5 315.0 529.0 313.5 530.5 310.5 532.0 307.5 533.5 304.5 535.0 301.5 536.5 298.5 538.0 297.0 539.5 294.0 541.0 291.0 542.5 288.0 544.0 285.0 545.5 282.0 547.0 279.0 548.5 276.0 550.0 273.0 551.5 270.0 553.0 267.0 554.5 264.0 556.0 261.0 557.5 258.0 559.0 255.0 560.5 252.0 562.0 249.0 563.5 246.0 565.0 244.5 566.5 241.5 568.0 238.5 569.5 235.5 571.0 234.0 572.5 231.0 574.0 228.0 575.5 226.5 577.0 223.5 578.5 222.0 580.0 220.5 581.5 217.5 583.0 216.0 584.5 214.5 586.0 213.0 587.5 211.5 589.0 210.0 590.5 208.5 592.0 207.0 593.5 205.5 595.0 205.5 596.5 204.0 598.0 204.0 599.5 202.5 601.0 202.5 602.5 202.5 604.0 201.0 605.5 201.0 607.0 201.0 608.5 201.0 610.0 201.0 611.5 202.5 613.0 202.5 614.5 202.5 616.0 204.0 617.5 204.0 619.0 205.5 620.5 205.5 622.0 207.0 623.5 208.5 625.0 210.0 626.5 211.5 628.0 213.0 629.5 214.5 631.0 216.0 632.5 217.5 634.0 220.5 635.5 222.0 637.0 223.5 638.5 226.5 640.0 228.0 641.5 231.0 643.0 232.5 644.5 235.5 646.0 238.5 647.5 241.5 649.0 243.0 650.5 246.0 652.0 249.0 653.5 252.0 655.0 255.0 656.5 258.0 658.0 261.0 659.5 264.0 661.0 267.0 662.5 270.0 664.0 273.0 665.5 276.0 667.0 277.5 668.5 280.5 670.0 283.5 671.5 286.5 673.0 289.5 674.5 292.5 676.0 295.5 677.5 298.5 679.0 301.5 680.5 304.5 682.0 307.5 683.5 310.5 685.0 312.0 686.5 315.0 688.0 318.0 689.5 319.5 691.0 322.5 692.5 325.5 694.0 327.0 695.5 328.5 697.0 331.5 698.5 333.0 700.0 334.5 701.5 337.5 703.0 339.0 704.5 340.5 706.0 342.0 707.5 343.5 709.0 345.0 710.5 345.0 712.0 346.5 713.5 348.0 715.0 348.0 716.5 349.5 718.0 349.5 719.5 349.5 721.0 351.0 722.5 351.0 724.0 351.0 725.5 351.0 727.0 351.0 728.5 351.0 730.0 349.5 731.5 349.5 733.0 349.5 734.5 348.0 736.0 348.0 737.5 346.5 739.0 345.0 740.5 345.0 742.0 343.5 743.5 342.0 745.0 340.5 746.5 339.0 748.0 337.5 749.5 334.5 751.0 333.0 752.5 331.5 754.0 328.5 755.5 327.0 757.0 325.5 758.5 322.5 760.0 319.5 761.5 318.0 763.0 315.0 764.5 312.0 766.0 310.5 767.5 307.5 769.0 304.5 770.5 301.5 772.0 298.5 773.5 295.5 775.0 292.5 776.5 289.5 778.0 286.5 779.5 283.5 781.0 280.5 782.5 277.5 784.0 276.0 785.5 273.0 787.0 270.0 788.5 267.0 790.0 264.0 791.5 261.0 793.0 258.0 794.5 255.0 796.0 252.0 797.5 249.0 799.0 246.0 800.5 243.0 802.0 241.5 803.5 238.5 805.0 235.5 806.5 232.5 808.0 231.0 809.5 228.0 811.0 226.5 812.5 223.5 814.0 222.0 815.5 220.5 817.0 217.5 818.5 216.0 820.0 214.5 821.5 213.0 823.0 211.5 824.5 210.0 826.0 208.5 827.5 207.0 829.0 205.5 830.5 205.5 832.0 204.0 833.5 204.0 835.0 202.5 836.5 202.5 838.0 202.5 839.5 201.0 841.0 201.0 842.5 201.0 844.0 201.0 845.5 201.0 847.0 202.5 848.5 202.5 850.0 202.5 851.5 204.0 853.0 204.0 854.5 205.5 856.0 205.5 857.5 207.0 859.0 208.5 860.5 210.0 862.0 211.5 863.5 213.0 865.0 214.5 866.5 216.0 868.0 217.5 869.5 220.5 871.0 222.0 872.5 223.5 874.0 226.5 875.5 228.0 877.0 231.0 878.5 234.0 880.0 235.5 881.5 238.5 883.0 241.5 884.5 244.5 886.0 246.0 887.5 249.0 889.0 252.0 890.5 255.0 892.0 258.0 893.5 261.0 895.0 264.0 896.5 267.0 898.0 270.0 899.5 273.0 901.0 276.0 902.5 279.0 904.0 282.0 905.5 285.0 907.0 288.0 908.5 291.0 910.0 294.0 911.5 297.0 913.0 298.5 914.5 301.5 916.0 304.5 917.5 307.5 919.0 310.5 920.5 313.5 922.0 315.0 923.5 318.0 925.0 321.0 926.5 322.5 928.0 325.5 929.5 327.0 931.0 330.0 932.5 331.5 934.0 333.0 935.5 336.0 937.0 337.5 938.5 339.0 940.0 340.5 941.5 342.0 943.0 343.5 944.5 345.0 946.0 345.0 947.5 346.5 949.0 348.0 950.5 348.0 952.0 349.5 953.5 349.5 955.0 349.5 956.5 351.0 958.0 351.0 959.5 351.0 961.0 351.0 962.5 351.0 964.0 351.0 965.5 349.5 967.0 349.5 968.5 349.5 970.0 348.0 971.5 348.0 973.0 346.5 974.5 345.0 976.0 343.5 977.5 343.5 979.0 342.0 980.5 340.5 982.0 339.0 983.5 336.0 985.0 334.5 986.5 333.0 988.0 331.5 989.5 328.5 991.0 327.0 992.5 324.0 994.0 322.5 995.5 319.5 997.0 318.0 998.5 315.0 1000.0 312.0 1001.5 309.0 1003.0 307.5 1004.5 304.5 1006.0 301.5 1007.5 298.5 1009.0 295.5 1010.5 292.5 1012.0 289.5 1013.5 286.5 1015.0 283.5 1016.5 280.5 1018.0 277.5 1019.5 274.5 1021.0 271.5 1022.5 268.5 1024.0 265.5 1025.5 262.5 1027.0 259.5 1028.5 256.5 1030.0 253.5 1031.5 252.0 1033.0 249.0 1034.5 246.0 1036.0 243.0 1037.5 240.0 1039.0 238.5 1040.5 235.5 1042.0 232.5 1043.5 231.0 1045.0 228.0 1046.5 226.5 1048.0 223.5 1049.5 222.0 1051.0 219.0 1052.5 217.5 1054.0 216.0 1055.5 214.5 1057.0 213.0 1058.5 211.5 1060.0 210.0 1061.5 208.5 1063.0 207.0 1064.5 205.5 1066.0 205.5 1067.5 204.0 1069.0 204.0 1070.5 202.5 1072.0 202.5 1073.5 202.5 1075.0 201.0 1076.5 201.0 1078.0 201.0 1079.5 201.0 1081.0 201.0 1082.5 202.5 1084.0 202.5 1085.5 202.5 1087.0 204.0 1088.5 204.0 1090.0 205.5 1091.5 207.0 1093.0 207.0 1094.5 208.5 1096.0 210.0 1097.5 211.5 1099.0 213.0 1100.5 214.5 1102.0 216.0 1103.5 219.0 1105.0 220.5 1106.5 222.0 1108.0 225.0 1109.5 226.5 1111.0 229.5 1112.5 231.0 1114.0 234.0 1115.5 237.0 1117.0 238.5 1118.5 241.5 1120.0 244.5 1121.5 247.5 1123.0 249.0 1124.5 252.0 1126.0 255.0 1127.5 258.0 1129.0 261.0 1130.5 264.0 1132.0 267.0 1133.5 270.0 1135.0 273.0 1136.5 276.0 1138.0 279.0 1139.5 282.0 1141.0 285.0 1142.5 288.0 1144.0 291.0 1145.5 294.0 1147.0 297.0 1148.5 300.0 1150.0 303.0 1151.5 304.5 1153.0 307.5 1154.5 310.5 1156.0 313.5 1157.5 316.5 1159.0 318.0 1160.5 321.0 1162.0 322.5 1163.5 325.5 1165.0 327.0 1166.5 330.0 1168.0 331.5 1169.5 334.5 1171.0 336.0 1172.5 337.5 1174.0 339.0 1175.5 340.5 1177.0 342.0 1178.5 343.5 1180.0 345.0 1181.5 346.5 1183.0 346.5 1184.5 348.0 1186.0 348.0 1187.5 349.5 1189.0 349.5 1190.5 351.0 1192.0 351.0 1193.5 351.0 1195.0 351.0 1196.5 351.0 1198.0 351.0 1199.5 351.0 1201.0 349.5 1202.5 349.5 1204.0 349.5 1205.5 348.0 1207.0 348.0 1208.5 346.5 1210.0 345.0 1211.5 343.5 1213.0 342.0 1214.5 342.0 1216.0 340.5 1217.5 337.5 1219.0 336.0 1220.5 334.5 1222.0 333.0 1223.5 330.0 1225.0 328.5 1226.5 327.0 1228.0 324.0 1229.5 322.5 1231.0 319.5" fill="none" stroke="#1fe62c" stroke-width="1.7"/>
<path d="M1230.0 315.2 1233.0 315.2 1236.0 315.2 1239.0 315.2 1242.0 315.2 1245.0 315.2 1248.0 315.2 1251.0 315.2 1254.0 316.1 1257.0 315.2 1260.0 315.2 1263.0 315.2 1266.0 315.2 1269.0 315.2 1272.0 315.2 1275.0 315.2 1278.0 315.2 1281.0 315.2 1284.0 315.2 1287.0 315.2 1290.0 315.2 1293.0 315.2 1296.0 315.2 1299.0 315.2 1302.0 315.2 1305.0 315.2 1308.0 316.1 1311.0 315.2 1314.0 315.2 1317.0 315.2 1320.0 315.2 1323.0 315.2 1326.0 315.2 1329.0 315.2 1332.0 315.2 1335.0 315.2 1338.0 315.2 1338.5 315.2" fill="none" stroke="#2aea38" stroke-width="1.45"/>
<path d="M299.5 300.0 301.0 297.0 302.5 294.0 304.0 291.0 305.5 288.0 307.0 285.0 308.5 282.0 310.0 279.0 311.5 276.0 313.0 273.0 314.5 270.0 316.0 267.0 317.5 264.0 319.0 261.0 320.5 258.0 322.0 255.0 323.5 253.5 325.0 250.5 326.5 247.5 328.0 244.5 329.5 241.5 331.0 238.5 332.5 237.0 334.0 234.0 335.5 231.0 337.0 229.5 338.5 226.5 340.0 225.0 341.5 222.0 343.0 220.5 344.5 219.0 346.0 216.0 347.5 214.5 349.0 213.0 350.5 211.5 352.0 210.0 353.5 208.5 355.0 207.0 356.5 205.5 358.0 205.5 359.5 204.0 361.0 204.0 362.5 202.5 364.0 202.5 365.5 201.0 367.0 201.0 368.5 201.0 370.0 201.0 371.5 201.0 373.0 201.0 374.5 201.0 376.0 202.5 377.5 202.5 379.0 202.5 380.5 204.0 382.0 204.0 383.5 205.5 385.0 207.0 386.5 207.0 388.0 208.5 389.5 210.0 391.0 211.5 392.5 213.0 394.0 214.5 395.5 217.5 397.0 219.0 398.5 220.5 400.0 223.5 401.5 225.0 403.0 228.0 404.5 229.5 406.0 232.5 407.5 234.0 409.0 237.0 410.5 240.0 412.0 241.5 413.5 244.5 415.0 247.5 416.5 250.5 418.0 253.5 419.5 256.5 421.0 259.5 422.5 262.5 424.0 265.5 425.5 268.5 427.0 271.5 428.5 274.5 430.0 277.5 431.5 280.5 433.0 283.5 434.5 286.5 436.0 289.5 437.5 292.5 439.0 294.0 440.5 297.0 442.0 300.0 443.5 303.0 445.0 306.0 446.5 309.0 448.0 312.0 449.5 313.5 451.0 316.5 452.5 319.5 454.0 321.0 455.5 324.0 457.0 325.5 458.5 328.5 460.0 330.0 461.5 333.0 463.0 334.5 464.5 336.0 466.0 337.5 467.5 339.0 469.0 340.5 470.5 342.0 472.0 343.5 473.5 345.0 475.0 346.5 476.5 346.5 478.0 348.0 479.5 348.0 481.0 349.5 482.5 349.5 484.0 349.5 485.5 351.0 487.0 351.0 488.5 351.0 490.0 351.0 491.5 351.0 493.0 349.5 494.5 349.5 496.0 349.5 497.5 348.0 499.0 348.0 500.5 346.5 502.0 345.0 503.5 345.0 505.0 343.5 506.5 342.0 508.0 340.5 509.5 339.0 511.0 337.5 512.5 336.0 514.0 333.0 515.5 331.5 517.0 330.0 518.5 327.0 520.0 325.5 521.5 322.5 523.0 321.0 524.5 318.0 526.0 315.0 527.5 313.5 529.0 310.5 530.5 307.5 532.0 304.5 533.5 303.0 535.0 300.0 536.5 297.0 538.0 294.0 539.5 291.0 541.0 288.0 542.5 285.0 544.0 282.0 545.5 279.0 547.0 276.0 548.5 273.0 550.0 270.0 551.5 267.0 553.0 264.0 554.5 261.0 556.0 258.0 557.5 255.0 559.0 252.0 560.5 249.0 562.0 247.5 563.5 244.5 565.0 241.5 566.5 238.5 568.0 235.5 569.5 234.0 571.0 231.0 572.5 229.5 574.0 226.5 575.5 225.0 577.0 222.0 578.5 220.5 580.0 217.5 581.5 216.0 583.0 214.5 584.5 213.0 586.0 211.5 587.5 210.0 589.0 208.5 590.5 207.0 592.0 205.5 593.5 205.5 595.0 204.0 596.5 204.0 598.0 202.5 599.5 202.5 601.0 201.0 602.5 201.0 604.0 201.0 605.5 201.0 607.0 201.0 608.5 201.0 610.0 201.0 611.5 202.5 613.0 202.5 614.5 202.5 616.0 204.0 617.5 204.0 619.0 205.5 620.5 207.0 622.0 208.5 623.5 208.5 625.0 210.0 626.5 211.5 628.0 213.0 629.5 216.0 631.0 217.5 632.5 219.0 634.0 220.5 635.5 223.5 637.0 225.0 638.5 228.0 640.0 229.5 641.5 232.5 643.0 235.5 644.5 237.0 646.0 240.0 647.5 243.0 649.0 246.0 650.5 247.5 652.0 250.5 653.5 253.5 655.0 256.5 656.5 259.5 658.0 262.5 659.5 265.5 661.0 268.5 662.5 271.5 664.0 274.5 665.5 277.5 667.0 280.5 668.5 283.5 670.0 286.5 671.5 289.5 673.0 292.5 674.5 295.5 676.0 298.5 677.5 301.5 679.0 303.0 680.5 306.0 682.0 309.0 683.5 312.0 685.0 315.0 686.5 316.5 688.0 319.5 689.5 322.5 691.0 324.0 692.5 327.0 694.0 328.5 695.5 330.0 697.0 333.0 698.5 334.5 700.0 336.0 701.5 337.5 703.0 339.0 704.5 340.5 706.0 342.0 707.5 343.5 709.0 345.0 710.5 346.5 712.0 346.5 713.5 348.0 715.0 348.0 716.5 349.5 718.0 349.5 719.5 349.5 721.0 351.0 722.5 351.0 724.0 351.0 725.5 351.0 727.0 351.0 728.5 349.5 730.0 349.5 731.5 349.5 733.0 348.0 734.5 348.0 736.0 346.5 737.5 345.0 739.0 345.0 740.5 343.5 742.0 342.0 743.5 340.5 745.0 339.0 746.5 337.5 748.0 334.5 749.5 333.0 751.0 331.5 752.5 330.0 754.0 327.0 755.5 325.5 757.0 322.5 758.5 321.0 760.0 318.0 761.5 315.0 763.0 313.5 764.5 310.5 766.0 307.5 767.5 304.5 769.0 301.5 770.5 298.5 772.0 297.0 773.5 294.0 775.0 291.0 776.5 288.0 778.0 285.0 779.5 282.0 781.0 279.0 782.5 276.0 784.0 273.0 785.5 270.0 787.0 267.0 788.5 264.0 790.0 261.0 791.5 258.0 793.0 255.0 794.5 252.0 796.0 249.0 797.5 246.0 799.0 243.0 800.5 241.5 802.0 238.5 803.5 235.5 805.0 234.0 806.5 231.0 808.0 228.0 809.5 226.5 811.0 223.5 812.5 222.0 814.0 220.5 815.5 217.5 817.0 216.0 818.5 214.5 820.0 213.0 821.5 211.5 823.0 210.0 824.5 208.5 826.0 207.0 827.5 205.5 829.0 205.5 830.5 204.0 832.0 202.5 833.5 202.5 835.0 202.5 836.5 201.0 838.0 201.0 839.5 201.0 841.0 201.0 842.5 201.0 844.0 201.0 845.5 201.0 847.0 202.5 848.5 202.5 850.0 202.5 851.5 204.0 853.0 204.0 854.5 205.5 856.0 207.0 857.5 208.5 859.0 210.0 860.5 210.0 862.0 211.5 863.5 214.5 865.0 216.0 866.5 217.5 868.0 219.0 869.5 222.0 871.0 223.5 872.5 225.0 874.0 228.0 875.5 229.5 877.0 232.5 878.5 235.5 880.0 237.0 881.5 240.0 883.0 243.0 884.5 246.0 886.0 249.0 887.5 250.5 889.0 253.5 890.5 256.5 892.0 259.5 893.5 262.5 895.0 265.5 896.5 268.5 898.0 271.5 899.5 274.5 901.0 277.5 902.5 280.5 904.0 283.5 905.5 286.5 907.0 289.5 908.5 292.5 910.0 295.5 911.5 298.5 913.0 301.5 914.5 304.5 916.0 306.0 917.5 309.0 919.0 312.0 920.5 315.0 922.0 316.5 923.5 319.5 925.0 322.5 926.5 324.0 928.0 327.0 929.5 328.5 931.0 331.5 932.5 333.0 934.0 334.5 935.5 336.0 937.0 337.5 938.5 340.5 940.0 342.0 941.5 342.0 943.0 343.5 944.5 345.0 946.0 346.5 947.5 346.5 949.0 348.0 950.5 348.0 952.0 349.5 953.5 349.5 955.0 349.5 956.5 351.0 958.0 351.0 959.5 351.0 961.0 351.0 962.5 349.5 964.0 349.5 965.5 349.5 967.0 349.5 968.5 348.0 970.0 348.0 971.5 346.5 973.0 345.0 974.5 343.5 976.0 343.5 977.5 342.0 979.0 340.5 980.5 339.0 982.0 337.5 983.5 334.5 985.0 333.0 986.5 331.5 988.0 328.5 989.5 327.0 991.0 324.0 992.5 322.5 994.0 319.5 995.5 318.0 997.0 315.0 998.5 312.0 1000.0 310.5 1001.5 307.5 1003.0 304.5 1004.5 301.5 1006.0 298.5 1007.5 295.5 1009.0 292.5 1010.5 289.5 1012.0 286.5 1013.5 283.5 1015.0 280.5 1016.5 277.5 1018.0 274.5 1019.5 271.5 1021.0 268.5 1022.5 265.5 1024.0 262.5 1025.5 261.0 1027.0 258.0 1028.5 255.0 1030.0 252.0 1031.5 249.0 1033.0 246.0 1034.5 243.0 1036.0 240.0 1037.5 238.5 1039.0 235.5 1040.5 232.5 1042.0 231.0 1043.5 228.0 1045.0 226.5 1046.5 223.5 1048.0 222.0 1049.5 219.0 1051.0 217.5 1052.5 216.0 1054.0 214.5 1055.5 213.0 1057.0 211.5 1058.5 210.0 1060.0 208.5 1061.5 207.0 1063.0 205.5 1064.5 205.5 1066.0 204.0 1067.5 202.5 1069.0 202.5 1070.5 202.5 1072.0 201.0 1073.5 201.0 1075.0 201.0 1076.5 201.0 1078.0 201.0 1079.5 201.0 1081.0 201.0 1082.5 202.5 1084.0 202.5 1085.5 202.5 1087.0 204.0 1088.5 205.5 1090.0 205.5 1091.5 207.0 1093.0 208.5 1094.5 210.0 1096.0 211.5 1097.5 213.0 1099.0 214.5 1100.5 216.0 1102.0 217.5 1103.5 219.0 1105.0 222.0 1106.5 223.5 1108.0 226.5 1109.5 228.0 1111.0 231.0 1112.5 232.5 1114.0 235.5 1115.5 238.5 1117.0 240.0 1118.5 243.0 1120.0 246.0 1121.5 249.0 1123.0 252.0 1124.5 255.0 1126.0 258.0 1127.5 261.0 1129.0 262.5 1130.5 265.5 1132.0 268.5 1133.5 271.5 1135.0 274.5 1136.5 277.5 1138.0 280.5 1139.5 283.5 1141.0 286.5 1142.5 289.5 1144.0 292.5 1145.5 295.5 1147.0 298.5 1148.5 301.5 1150.0 304.5 1151.5 307.5 1153.0 310.5 1154.5 312.0 1156.0 315.0 1157.5 318.0 1159.0 319.5 1160.5 322.5 1162.0 324.0 1163.5 327.0 1165.0 328.5 1166.5 331.5 1168.0 333.0 1169.5 334.5 1171.0 337.5 1172.5 339.0 1174.0 340.5 1175.5 342.0 1177.0 343.5 1178.5 343.5 1180.0 345.0 1181.5 346.5 1183.0 348.0 1184.5 348.0 1186.0 349.5 1187.5 349.5 1189.0 349.5 1190.5 349.5 1192.0 351.0 1193.5 351.0 1195.0 351.0 1196.5 351.0 1198.0 349.5 1199.5 349.5 1201.0 349.5 1202.5 348.0 1204.0 348.0 1205.5 346.5 1207.0 346.5 1208.5 345.0 1210.0 343.5 1211.5 342.0 1213.0 342.0 1214.5 340.5 1216.0 337.5 1217.5 336.0 1219.0 334.5 1220.5 333.0 1222.0 331.5 1223.5 328.5 1225.0 327.0 1226.5 324.0 1228.0 322.5 1229.5 319.5 1231.0 316.5" fill="none" stroke="#22dc78" stroke-width="1.6"/>
<path d="M299.5 300.0 301.0 297.0 302.5 294.0 304.0 291.0 305.5 288.0 307.0 285.0 308.5 282.0 310.0 279.0 311.5 276.0 313.0 273.0 314.5 270.0 316.0 267.0 317.5 264.0 319.0 261.0 320.5 258.0 322.0 255.0 323.5 253.5 325.0 250.5 326.5 247.5 328.0 244.5 329.5 241.5 331.0 238.5 332.5 237.0 334.0 234.0 335.5 231.0 337.0 229.5 338.5 226.5 340.0 225.0 341.5 222.0 343.0 220.5 344.5 219.0 346.0 216.0 347.5 214.5 349.0 213.0 350.5 211.5 352.0 210.0 353.5 208.5 355.0 207.0 356.5 205.5 358.0 205.5 359.5 204.0 361.0 204.0 362.5 202.5 364.0 202.5 365.5 201.0 367.0 201.0 368.5 201.0 370.0 201.0 371.5 201.0 373.0 201.0 374.5 201.0 376.0 202.5 377.5 202.5 379.0 202.5 380.5 204.0 382.0 204.0 383.5 205.5 385.0 207.0 386.5 207.0 388.0 208.5 389.5 210.0 391.0 211.5 392.5 213.0 394.0 214.5 395.5 217.5 397.0 219.0 398.5 220.5 400.0 223.5 401.5 225.0 403.0 228.0 404.5 229.5 406.0 232.5 407.5 234.0 409.0 237.0 410.5 240.0 412.0 241.5 413.5 244.5 415.0 247.5 416.5 250.5 418.0 253.5 419.5 256.5 421.0 259.5 422.5 262.5 424.0 265.5 425.5 268.5 427.0 271.5 428.5 274.5 430.0 277.5 431.5 280.5 433.0 283.5 434.5 286.5 436.0 289.5 437.5 292.5 439.0 294.0 440.5 297.0 442.0 300.0 443.5 303.0 445.0 306.0 446.5 309.0 448.0 312.0 449.5 313.5 451.0 316.5 452.5 319.5 454.0 321.0 455.5 324.0 457.0 325.5 458.5 328.5 460.0 330.0 461.5 333.0 463.0 334.5 464.5 336.0 466.0 337.5 467.5 339.0 469.0 340.5 470.5 342.0 472.0 343.5 473.5 345.0 475.0 346.5 476.5 346.5 478.0 348.0 479.5 348.0 481.0 349.5 482.5 349.5 484.0 349.5 485.5 351.0 487.0 351.0 488.5 351.0 490.0 351.0 491.5 351.0 493.0 349.5 494.5 349.5 496.0 349.5 497.5 348.0 499.0 348.0 500.5 346.5 502.0 345.0 503.5 345.0 505.0 343.5 506.5 342.0 508.0 340.5 509.5 339.0 511.0 337.5 512.5 336.0 514.0 333.0 515.5 331.5 517.0 330.0 518.5 327.0 520.0 325.5 521.5 322.5 523.0 321.0 524.5 318.0 526.0 315.0 527.5 313.5 529.0 310.5 530.5 307.5 532.0 304.5 533.5 303.0 535.0 300.0 536.5 297.0 538.0 294.0 539.5 291.0 541.0 288.0 542.5 285.0 544.0 282.0 545.5 279.0 547.0 276.0 548.5 273.0 550.0 270.0 551.5 267.0 553.0 264.0 554.5 261.0 556.0 258.0 557.5 255.0 559.0 252.0 560.5 249.0 562.0 247.5 563.5 244.5 565.0 241.5 566.5 238.5 568.0 235.5 569.5 234.0 571.0 231.0 572.5 229.5 574.0 226.5 575.5 225.0 577.0 222.0 578.5 220.5 580.0 217.5 581.5 216.0 583.0 214.5 584.5 213.0 586.0 211.5 587.5 210.0 589.0 208.5 590.5 207.0 592.0 205.5 593.5 205.5 595.0 204.0 596.5 204.0 598.0 202.5 599.5 202.5 601.0 201.0 602.5 201.0 604.0 201.0 605.5 201.0 607.0 201.0 608.5 201.0 610.0 201.0 611.5 202.5 613.0 202.5 614.5 202.5 616.0 204.0 617.5 204.0 619.0 205.5 620.5 207.0 622.0 208.5 623.5 208.5 625.0 210.0 626.5 211.5 628.0 213.0 629.5 216.0 631.0 217.5 632.5 219.0 634.0 220.5 635.5 223.5 637.0 225.0 638.5 228.0 640.0 229.5 641.5 232.5 643.0 235.5 644.5 237.0 646.0 240.0 647.5 243.0 649.0 246.0 650.5 247.5 652.0 250.5 653.5 253.5 655.0 256.5 656.5 259.5 658.0 262.5 659.5 265.5 661.0 268.5 662.5 271.5 664.0 274.5 665.5 277.5 667.0 280.5 668.5 283.5 670.0 286.5 671.5 289.5 673.0 292.5 674.5 295.5 676.0 298.5 677.5 301.5 679.0 303.0 680.5 306.0 682.0 309.0 683.5 312.0 685.0 315.0 686.5 316.5 688.0 319.5 689.5 322.5 691.0 324.0 692.5 327.0 694.0 328.5 695.5 330.0 697.0 333.0 698.5 334.5 700.0 336.0 701.5 337.5 703.0 339.0 704.5 340.5 706.0 342.0 707.5 343.5 709.0 345.0 710.5 346.5 712.0 346.5 713.5 348.0 715.0 348.0 716.5 349.5 718.0 349.5 719.5 349.5 721.0 351.0 722.5 351.0 724.0 351.0 725.5 351.0 727.0 351.0 728.5 349.5 730.0 349.5 731.5 349.5 733.0 348.0 734.5 348.0 736.0 346.5 737.5 345.0 739.0 345.0 740.5 343.5 742.0 342.0 743.5 340.5 745.0 339.0 746.5 337.5 748.0 334.5 749.5 333.0 751.0 331.5 752.5 330.0 754.0 327.0 755.5 325.5 757.0 322.5 758.5 321.0 760.0 318.0 761.5 315.0 763.0 313.5 764.5 310.5 766.0 307.5 767.5 304.5 769.0 301.5 770.5 298.5 772.0 297.0 773.5 294.0 775.0 291.0 776.5 288.0 778.0 285.0 779.5 282.0 781.0 279.0 782.5 276.0 784.0 273.0 785.5 270.0 787.0 267.0 788.5 264.0 790.0 261.0 791.5 258.0 793.0 255.0 794.5 252.0 796.0 249.0 797.5 246.0 799.0 243.0 800.5 241.5 802.0 238.5 803.5 235.5 805.0 234.0 806.5 231.0 808.0 228.0 809.5 226.5 811.0 223.5 812.5 222.0 814.0 220.5 815.5 217.5 817.0 216.0 818.5 214.5 820.0 213.0 821.5 211.5 823.0 210.0 824.5 208.5 826.0 207.0 827.5 205.5 829.0 205.5 830.5 204.0 832.0 202.5 833.5 202.5 835.0 202.5 836.5 201.0 838.0 201.0 839.5 201.0 841.0 201.0 842.5 201.0 844.0 201.0 845.5 201.0 847.0 202.5 848.5 202.5 850.0 202.5 851.5 204.0 853.0 204.0 854.5 205.5 856.0 207.0 857.5 208.5 859.0 210.0 860.5 210.0 862.0 211.5 863.5 214.5 865.0 216.0 866.5 217.5 868.0 219.0 869.5 222.0 871.0 223.5 872.5 225.0 874.0 228.0 875.5 229.5 877.0 232.5 878.5 235.5 880.0 237.0 881.5 240.0 883.0 243.0 884.5 246.0 886.0 249.0 887.5 250.5 889.0 253.5 890.5 256.5 892.0 259.5 893.5 262.5 895.0 265.5 896.5 268.5 898.0 271.5 899.5 274.5 901.0 277.5 902.5 280.5 904.0 283.5 905.5 286.5 907.0 289.5 908.5 292.5 910.0 295.5 911.5 298.5 913.0 301.5 914.5 304.5 916.0 306.0 917.5 309.0 919.0 312.0 920.5 315.0 922.0 316.5 923.5 319.5 925.0 322.5 926.5 324.0 928.0 327.0 929.5 328.5 931.0 331.5 932.5 333.0 934.0 334.5 935.5 336.0 937.0 337.5 938.5 340.5 940.0 342.0 941.5 342.0 943.0 343.5 944.5 345.0 946.0 346.5 947.5 346.5 949.0 348.0 950.5 348.0 952.0 349.5 953.5 349.5 955.0 349.5 956.5 351.0 958.0 351.0 959.5 351.0 961.0 351.0 962.5 349.5 964.0 349.5 965.5 349.5 967.0 349.5 968.5 348.0 970.0 348.0 971.5 346.5 973.0 345.0 974.5 343.5 976.0 343.5 977.5 342.0 979.0 340.5 980.5 339.0 982.0 337.5 983.5 334.5 985.0 333.0 986.5 331.5 988.0 328.5 989.5 327.0 991.0 324.0 992.5 322.5 994.0 319.5 995.5 318.0 997.0 315.0 998.5 312.0 1000.0 310.5 1001.5 307.5 1003.0 304.5 1004.5 301.5 1006.0 298.5 1007.5 295.5 1009.0 292.5 1010.5 289.5 1012.0 286.5 1013.5 283.5 1015.0 280.5 1016.5 277.5 1018.0 274.5 1019.5 271.5 1021.0 268.5 1022.5 265.5 1024.0 262.5 1025.5 261.0 1027.0 258.0 1028.5 255.0 1030.0 252.0 1031.5 249.0 1033.0 246.0 1034.5 243.0 1036.0 240.0 1037.5 238.5 1039.0 235.5 1040.5 232.5 1042.0 231.0 1043.5 228.0 1045.0 226.5 1046.5 223.5 1048.0 222.0 1049.5 219.0 1051.0 217.5 1052.5 216.0 1054.0 214.5 1055.5 213.0 1057.0 211.5 1058.5 210.0 1060.0 208.5 1061.5 207.0 1063.0 205.5 1064.5 205.5 1066.0 204.0 1067.5 202.5 1069.0 202.5 1070.5 202.5 1072.0 201.0 1073.5 201.0 1075.0 201.0 1076.5 201.0 1078.0 201.0 1079.5 201.0 1081.0 201.0 1082.5 202.5 1084.0 202.5 1085.5 202.5 1087.0 204.0 1088.5 205.5 1090.0 205.5 1091.5 207.0 1093.0 208.5 1094.5 210.0 1096.0 211.5 1097.5 213.0 1099.0 214.5 1100.5 216.0 1102.0 217.5 1103.5 219.0 1105.0 222.0 1106.5 223.5 1108.0 226.5 1109.5 228.0 1111.0 231.0 1112.5 232.5 1114.0 235.5 1115.5 238.5 1117.0 240.0 1118.5 243.0 1120.0 246.0 1121.5 249.0 1123.0 252.0 1124.5 255.0 1126.0 258.0 1127.5 261.0 1129.0 262.5 1130.5 265.5 1132.0 268.5 1133.5 271.5 1135.0 274.5 1136.5 277.5 1138.0 280.5 1139.5 283.5 1141.0 286.5 1142.5 289.5 1144.0 292.5 1145.5 295.5 1147.0 298.5 1148.5 301.5 1150.0 304.5 1151.5 307.5 1153.0 310.5 1154.5 312.0 1156.0 315.0 1157.5 318.0 1159.0 319.5 1160.5 322.5 1162.0 324.0 1163.5 327.0 1165.0 328.5 1166.5 331.5 1168.0 333.0 1169.5 334.5 1171.0 337.5 1172.5 339.0 1174.0 340.5 1175.5 342.0 1177.0 343.5 1178.5 343.5 1180.0 345.0 1181.5 346.5 1183.0 348.0 1184.5 348.0 1186.0 349.5 1187.5 349.5 1189.0 349.5 1190.5 349.5 1192.0 351.0 1193.5 351.0 1195.0 351.0 1196.5 351.0 1198.0 349.5 1199.5 349.5 1201.0 349.5 1202.5 348.0 1204.0 348.0 1205.5 346.5 1207.0 346.5 1208.5 345.0 1210.0 343.5 1211.5 342.0 1213.0 342.0 1214.5 340.5 1216.0 337.5 1217.5 336.0 1219.0 334.5 1220.5 333.0 1222.0 331.5 1223.5 328.5 1225.0 327.0 1226.5 324.0 1228.0 322.5 1229.5 319.5 1231.0 316.5" fill="none" stroke="#1020d0" stroke-width="1.7" stroke-dasharray="3.2 1.8"/>
<path d="M1231.0 316.5 1232.5 315.0 1234.0 312.0 1235.5 309.0 1237.0 306.0 1238.5 304.5 1240.0 301.5 1241.5 298.5 1243.0 295.5 1244.5 292.5 1246.0 289.5 1247.5 286.5 1249.0 283.5 1250.5 280.5 1252.0 277.5 1253.5 274.5 1255.0 271.5 1256.5 268.5 1258.0 265.5 1259.5 262.5 1261.0 259.5 1262.5 256.5 1264.0 253.5 1265.5 250.5 1267.0 249.0 1268.5 246.0 1270.0 243.0 1271.5 240.0 1273.0 237.0 1274.5 235.5 1276.0 232.5 1277.5 229.5 1279.0 228.0 1280.5 225.0 1282.0 223.5 1283.5 222.0 1285.0 219.0 1286.5 217.5 1288.0 216.0 1289.5 214.5 1291.0 211.5 1292.5 210.0 1294.0 210.0 1295.5 208.5 1297.0 207.0 1298.5 205.5 1300.0 204.0 1301.5 204.0 1303.0 202.5 1304.5 202.5 1306.0 202.5 1307.5 201.0 1309.0 201.0 1310.5 201.0 1312.0 201.0 1313.5 201.0 1315.0 201.0 1316.5 201.0 1318.0 202.5 1319.5 202.5 1321.0 202.5 1322.5 204.0 1324.0 205.5 1325.5 205.5 1327.0 207.0 1328.5 208.5 1330.0 210.0 1331.5 211.5 1333.0 213.0 1334.5 214.5 1336.0 216.0 1337.5 217.5" fill="none" stroke="#1428e8" stroke-width="1.9"/>
<rect x="1418" y="83" width="2.1" height="385.6" fill="#2a2a2a"/>
<circle cx="1418.7" cy="223.3" r="8.3" fill="#0000ff"/>
<circle cx="24.5" cy="68.1" r="7.7" fill="#fff" stroke="url(#rg)" stroke-width="2.6"/><circle cx="24.6" cy="68.1" r="3.1" fill="#000"/>
<circle cx="24.5" cy="98.1" r="7.7" fill="#fff" stroke="url(#rg)" stroke-width="2.6"/>
<circle cx="24.5" cy="128.1" r="7.7" fill="#fff" stroke="url(#rg)" stroke-width="2.6"/>
<circle cx="24.3" cy="570.8" r="7.7" fill="#fff" stroke="url(#rg)" stroke-width="2.6"/>
<circle cx="24.3" cy="600.8" r="7.7" fill="#fff" stroke="url(#rg)" stroke-width="2.6"/>
<circle cx="24.3" cy="630.8" r="7.7" fill="#fff" stroke="url(#rg)" stroke-width="2.6"/>
<circle cx="24.3" cy="660.8" r="7.7" fill="#fff" stroke="url(#rg)" stroke-width="2.6"/><circle cx="24.400000000000002" cy="660.8" r="3.1" fill="#000"/>
<circle cx="24.3" cy="690.8" r="7.7" fill="#fff" stroke="url(#rg)" stroke-width="2.6"/>
<circle cx="24.3" cy="720.8" r="7.7" fill="#fff" stroke="url(#rg)" stroke-width="2.6"/>
<circle cx="24.3" cy="750.8" r="7.7" fill="#fff" stroke="url(#rg)" stroke-width="2.6"/>
<rect x="15.4" y="246.6" width="19.4" height="19.2" fill="#fafafa"/><path d="M15.4 246.6h19.4l-2.2 2.2h-15v15l-2.2 2z" fill="#a8a8a8"/><path d="M16.8 248.0h16.4l-1.4 1.6h-13.4v13.6l-1.6 1.4z" fill="#6c6c6c"/><path d="M33.4 248.2v16.2h-16.4l1.6-1.5h13.3v-13.2z" fill="#e6e6e6"/><rect x="18.6" y="249.79999999999998" width="13.4" height="13.2" fill="#fff"/><polygon points="20.1,254.2 23.6,257.7 30.3,251.0 30.3,255.2 23.6,261.9 20.1,258.4" fill="#000"/>
<rect x="15.4" y="276.6" width="19.4" height="19.2" fill="#fafafa"/><path d="M15.4 276.6h19.4l-2.2 2.2h-15v15l-2.2 2z" fill="#a8a8a8"/><path d="M16.8 278.0h16.4l-1.4 1.6h-13.4v13.6l-1.6 1.4z" fill="#6c6c6c"/><path d="M33.4 278.20000000000005v16.2h-16.4l1.6-1.5h13.3v-13.2z" fill="#e6e6e6"/><rect x="18.6" y="279.8" width="13.4" height="13.2" fill="#fff"/><polygon points="20.1,284.2 23.6,287.7 30.3,281.0 30.3,285.2 23.6,291.9 20.1,288.4" fill="#000"/>
<rect x="15.4" y="306.6" width="19.4" height="19.2" fill="#fafafa"/><path d="M15.4 306.6h19.4l-2.2 2.2h-15v15l-2.2 2z" fill="#a8a8a8"/><path d="M16.8 308.0h16.4l-1.4 1.6h-13.4v13.6l-1.6 1.4z" fill="#6c6c6c"/><path d="M33.4 308.20000000000005v16.2h-16.4l1.6-1.5h13.3v-13.2z" fill="#e6e6e6"/><rect x="18.6" y="309.8" width="13.4" height="13.2" fill="#fff"/><polygon points="20.1,314.2 23.6,317.7 30.3,311.0 30.3,315.2 23.6,321.9 20.1,318.4" fill="#000"/>
<rect x="15.4" y="336.6" width="19.4" height="19.2" fill="#fafafa"/><path d="M15.4 336.6h19.4l-2.2 2.2h-15v15l-2.2 2z" fill="#a8a8a8"/><path d="M16.8 338.0h16.4l-1.4 1.6h-13.4v13.6l-1.6 1.4z" fill="#6c6c6c"/><path d="M33.4 338.20000000000005v16.2h-16.4l1.6-1.5h13.3v-13.2z" fill="#e6e6e6"/><rect x="18.6" y="339.8" width="13.4" height="13.2" fill="#fff"/><polygon points="20.1,344.2 23.6,347.7 30.3,341.0 30.3,345.2 23.6,351.9 20.1,348.4" fill="#000"/>
<rect x="15.4" y="366.6" width="19.4" height="19.2" fill="#fafafa"/><path d="M15.4 366.6h19.4l-2.2 2.2h-15v15l-2.2 2z" fill="#a8a8a8"/><path d="M16.8 368.0h16.4l-1.4 1.6h-13.4v13.6l-1.6 1.4z" fill="#6c6c6c"/><path d="M33.4 368.20000000000005v16.2h-16.4l1.6-1.5h13.3v-13.2z" fill="#e6e6e6"/><rect x="18.6" y="369.8" width="13.4" height="13.2" fill="#fff"/><polygon points="20.1,374.2 23.6,377.7 30.3,371.0 30.3,375.2 23.6,381.9 20.1,378.4" fill="#000"/>
<path d="M41.7 651.6V671.4M86.9 651.6V671.4" fill="none" stroke="#222" stroke-width="1.7" stroke-dasharray="1.5 1.5"/>
<rect x="138.7" y="53" width="67" height="30.5" fill="#6a6a6a"/><rect x="140.2" y="54.5" width="62.7" height="26.2" fill="#a3a3a3"/><rect x="140.2" y="54.5" width="61.0" height="24.5" fill="#ffffff"/><rect x="142.1" y="56.4" width="59.1" height="22.6" fill="#f0f0f0"/>
<rect x="138.7" y="83" width="67" height="30.5" fill="#6a6a6a"/><rect x="140.2" y="84.5" width="62.7" height="26.2" fill="#a3a3a3"/><rect x="140.2" y="84.5" width="61.0" height="24.5" fill="#ffffff"/><rect x="142.1" y="86.4" width="59.1" height="22.6" fill="#f0f0f0"/>
<rect x="138.7" y="113" width="67" height="30.3" fill="#6a6a6a"/><rect x="140.2" y="114.5" width="62.7" height="26.0" fill="#a3a3a3"/><rect x="140.2" y="114.5" width="61.0" height="24.3" fill="#ffffff"/><rect x="142.1" y="116.4" width="59.1" height="22.4" fill="#f0f0f0"/>
<rect x="29.2" y="410.6" width="150" height="44.5" fill="#6a6a6a"/><rect x="30.7" y="412.1" width="145.7" height="40.2" fill="#a3a3a3"/><rect x="30.7" y="412.1" width="144.0" height="38.5" fill="#ffffff"/><rect x="32.6" y="414.0" width="142.1" height="36.6" fill="#f0f0f0"/>
<rect x="239" y="560.3" width="45.2" height="30" fill="#6a6a6a"/><rect x="240.5" y="561.8" width="40.900000000000006" height="25.7" fill="#a3a3a3"/><rect x="240.5" y="561.8" width="39.2" height="24.0" fill="#ffffff"/><rect x="242.4" y="563.6999999999999" width="37.300000000000004" height="22.1" fill="#f0f0f0"/>
<rect x="239" y="650.4" width="45.2" height="30" fill="#6a6a6a"/><rect x="240.5" y="651.9" width="40.900000000000006" height="25.7" fill="#a3a3a3"/><rect x="240.5" y="651.9" width="39.2" height="24.0" fill="#ffffff"/><rect x="242.4" y="653.8" width="37.300000000000004" height="22.1" fill="#f0f0f0"/>
<rect x="239.1" y="782.2" width="75" height="37.5" fill="#6a6a6a"/><rect x="240.6" y="783.7" width="70.7" height="33.2" fill="#a3a3a3"/><rect x="240.6" y="783.7" width="69.0" height="31.5" fill="#ffffff"/><rect x="242.5" y="785.6" width="67.1" height="29.6" fill="#f0f0f0"/>
<rect x="313.6" y="782.2" width="75.2" height="37.5" fill="#6a6a6a"/><rect x="315.1" y="783.7" width="70.9" height="33.2" fill="#a3a3a3"/><rect x="315.1" y="783.7" width="69.2" height="31.5" fill="#ffffff"/><rect x="317.0" y="785.6" width="67.3" height="29.6" fill="#f0f0f0"/>
<rect x="438.9" y="782.2" width="75" height="37.5" fill="#6a6a6a"/><rect x="440.4" y="783.7" width="70.7" height="33.2" fill="#a3a3a3"/><rect x="440.4" y="783.7" width="69.0" height="31.5" fill="#ffffff"/><rect x="442.29999999999995" y="785.6" width="67.1" height="29.6" fill="#f0f0f0"/>
<rect x="513.4" y="782.2" width="75" height="37.5" fill="#6a6a6a"/><rect x="514.9" y="783.7" width="70.7" height="33.2" fill="#a3a3a3"/><rect x="514.9" y="783.7" width="69.0" height="31.5" fill="#ffffff"/><rect x="516.8" y="785.6" width="67.1" height="29.6" fill="#f0f0f0"/>
<rect x="524" y="560.3" width="30" height="22.5" fill="#6a6a6a"/><rect x="525.5" y="561.8" width="25.7" height="18.2" fill="#a3a3a3"/><rect x="525.5" y="561.8" width="24.0" height="16.5" fill="#ffffff"/><rect x="527.4" y="563.6999999999999" width="22.1" height="14.6" fill="#f0f0f0"/>
<rect x="557" y="560.3" width="30" height="22.5" fill="#6a6a6a"/><rect x="558.5" y="561.8" width="25.7" height="18.2" fill="#a3a3a3"/><rect x="558.5" y="561.8" width="24.0" height="16.5" fill="#ffffff"/><rect x="560.4" y="563.6999999999999" width="22.1" height="14.6" fill="#f0f0f0"/>
<rect x="524" y="597.8" width="30" height="22.5" fill="#6a6a6a"/><rect x="525.5" y="599.3" width="25.7" height="18.2" fill="#a3a3a3"/><rect x="525.5" y="599.3" width="24.0" height="16.5" fill="#ffffff"/><rect x="527.4" y="601.1999999999999" width="22.1" height="14.6" fill="#f0f0f0"/>
<rect x="557" y="597.8" width="30" height="22.5" fill="#6a6a6a"/><rect x="558.5" y="599.3" width="25.7" height="18.2" fill="#a3a3a3"/><rect x="558.5" y="599.3" width="24.0" height="16.5" fill="#ffffff"/><rect x="560.4" y="601.1999999999999" width="22.1" height="14.6" fill="#f0f0f0"/>
<rect x="524" y="635.3" width="30" height="22.5" fill="#6a6a6a"/><rect x="525.5" y="636.8" width="25.7" height="18.2" fill="#a3a3a3"/><rect x="525.5" y="636.8" width="24.0" height="16.5" fill="#ffffff"/><rect x="527.4" y="638.6999999999999" width="22.1" height="14.6" fill="#f0f0f0"/>
<rect x="557" y="635.3" width="30" height="22.5" fill="#6a6a6a"/><rect x="558.5" y="636.8" width="25.7" height="18.2" fill="#a3a3a3"/><rect x="558.5" y="636.8" width="24.0" height="16.5" fill="#ffffff"/><rect x="560.4" y="638.6999999999999" width="22.1" height="14.6" fill="#f0f0f0"/>
<rect x="524" y="672.8" width="30" height="22.5" fill="#6a6a6a"/><rect x="525.5" y="674.3" width="25.7" height="18.2" fill="#a3a3a3"/><rect x="525.5" y="674.3" width="24.0" height="16.5" fill="#ffffff"/><rect x="527.4" y="676.1999999999999" width="22.1" height="14.6" fill="#f0f0f0"/>
<rect x="557" y="672.8" width="30" height="22.5" fill="#6a6a6a"/><rect x="558.5" y="674.3" width="25.7" height="18.2" fill="#a3a3a3"/><rect x="558.5" y="674.3" width="24.0" height="16.5" fill="#ffffff"/><rect x="560.4" y="676.1999999999999" width="22.1" height="14.6" fill="#f0f0f0"/>
<rect x="524" y="710.3" width="30" height="22.5" fill="#6a6a6a"/><rect x="525.5" y="711.8" width="25.7" height="18.2" fill="#a3a3a3"/><rect x="525.5" y="711.8" width="24.0" height="16.5" fill="#ffffff"/><rect x="527.4" y="713.6999999999999" width="22.1" height="14.6" fill="#f0f0f0"/>
<rect x="557" y="710.3" width="30" height="22.5" fill="#6a6a6a"/><rect x="558.5" y="711.8" width="25.7" height="18.2" fill="#a3a3a3"/><rect x="558.5" y="711.8" width="24.0" height="16.5" fill="#ffffff"/><rect x="560.4" y="713.6999999999999" width="22.1" height="14.6" fill="#f0f0f0"/>
<rect x="921.5" y="560.3" width="30" height="22.5" fill="#6a6a6a"/><rect x="923.0" y="561.8" width="25.7" height="18.2" fill="#a3a3a3"/><rect x="923.0" y="561.8" width="24.0" height="16.5" fill="#ffffff"/><rect x="924.9" y="563.6999999999999" width="22.1" height="14.6" fill="#f0f0f0"/>
<rect x="954.6" y="560.3" width="30" height="22.5" fill="#6a6a6a"/><rect x="956.1" y="561.8" width="25.7" height="18.2" fill="#a3a3a3"/><rect x="956.1" y="561.8" width="24.0" height="16.5" fill="#ffffff"/><rect x="958.0" y="563.6999999999999" width="22.1" height="14.6" fill="#f0f0f0"/>
<rect x="921.5" y="597.8" width="30" height="22.5" fill="#6a6a6a"/><rect x="923.0" y="599.3" width="25.7" height="18.2" fill="#a3a3a3"/><rect x="923.0" y="599.3" width="24.0" height="16.5" fill="#ffffff"/><rect x="924.9" y="601.1999999999999" width="22.1" height="14.6" fill="#f0f0f0"/>
<rect x="954.6" y="597.8" width="30" height="22.5" fill="#6a6a6a"/><rect x="956.1" y="599.3" width="25.7" height="18.2" fill="#a3a3a3"/><rect x="956.1" y="599.3" width="24.0" height="16.5" fill="#ffffff"/><rect x="958.0" y="601.1999999999999" width="22.1" height="14.6" fill="#f0f0f0"/>
<rect x="921.5" y="635.3" width="30" height="22.5" fill="#6a6a6a"/><rect x="923.0" y="636.8" width="25.7" height="18.2" fill="#a3a3a3"/><rect x="923.0" y="636.8" width="24.0" height="16.5" fill="#ffffff"/><rect x="924.9" y="638.6999999999999" width="22.1" height="14.6" fill="#f0f0f0"/>
<rect x="954.6" y="635.3" width="30" height="22.5" fill="#6a6a6a"/><rect x="956.1" y="636.8" width="25.7" height="18.2" fill="#a3a3a3"/><rect x="956.1" y="636.8" width="24.0" height="16.5" fill="#ffffff"/><rect x="958.0" y="638.6999999999999" width="22.1" height="14.6" fill="#f0f0f0"/>
<rect x="921.5" y="672.8" width="30" height="22.5" fill="#6a6a6a"/><rect x="923.0" y="674.3" width="25.7" height="18.2" fill="#a3a3a3"/><rect x="923.0" y="674.3" width="24.0" height="16.5" fill="#ffffff"/><rect x="924.9" y="676.1999999999999" width="22.1" height="14.6" fill="#f0f0f0"/>
<rect x="954.6" y="672.8" width="30" height="22.5" fill="#6a6a6a"/><rect x="956.1" y="674.3" width="25.7" height="18.2" fill="#a3a3a3"/><rect x="956.1" y="674.3" width="24.0" height="16.5" fill="#ffffff"/><rect x="958.0" y="676.1999999999999" width="22.1" height="14.6" fill="#f0f0f0"/>
<rect x="1331.1" y="560.3" width="30" height="22.5" fill="#6a6a6a"/><rect x="1332.6" y="561.8" width="25.7" height="18.2" fill="#a3a3a3"/><rect x="1332.6" y="561.8" width="24.0" height="16.5" fill="#ffffff"/><rect x="1334.5" y="563.6999999999999" width="22.1" height="14.6" fill="#f0f0f0"/>
<rect x="1364.2" y="560.3" width="30" height="22.5" fill="#6a6a6a"/><rect x="1365.7" y="561.8" width="25.7" height="18.2" fill="#a3a3a3"/><rect x="1365.7" y="561.8" width="24.0" height="16.5" fill="#ffffff"/><rect x="1367.6000000000001" y="563.6999999999999" width="22.1" height="14.6" fill="#f0f0f0"/>
<rect x="1331.1" y="597.8" width="30" height="22.5" fill="#6a6a6a"/><rect x="1332.6" y="599.3" width="25.7" height="18.2" fill="#a3a3a3"/><rect x="1332.6" y="599.3" width="24.0" height="16.5" fill="#ffffff"/><rect x="1334.5" y="601.1999999999999" width="22.1" height="14.6" fill="#f0f0f0"/>
<rect x="1364.2" y="597.8" width="30" height="22.5" fill="#6a6a6a"/><rect x="1365.7" y="599.3" width="25.7" height="18.2" fill="#a3a3a3"/><rect x="1365.7" y="599.3" width="24.0" height="16.5" fill="#ffffff"/><rect x="1367.6000000000001" y="601.1999999999999" width="22.1" height="14.6" fill="#f0f0f0"/>
<rect x="1331.1" y="635.3" width="30" height="22.5" fill="#6a6a6a"/><rect x="1332.6" y="636.8" width="25.7" height="18.2" fill="#a3a3a3"/><rect x="1332.6" y="636.8" width="24.0" height="16.5" fill="#ffffff"/><rect x="1334.5" y="638.6999999999999" width="22.1" height="14.6" fill="#f0f0f0"/>
<rect x="1364.2" y="635.3" width="30" height="22.5" fill="#6a6a6a"/><rect x="1365.7" y="636.8" width="25.7" height="18.2" fill="#a3a3a3"/><rect x="1365.7" y="636.8" width="24.0" height="16.5" fill="#ffffff"/><rect x="1367.6000000000001" y="638.6999999999999" width="22.1" height="14.6" fill="#f0f0f0"/>
<rect x="1447.9" y="168.8" width="30" height="22.5" fill="#6a6a6a"/><rect x="1449.4" y="170.3" width="25.7" height="18.2" fill="#a3a3a3"/><rect x="1449.4" y="170.3" width="24.0" height="16.5" fill="#ffffff"/><rect x="1451.3000000000002" y="172.20000000000002" width="22.1" height="14.6" fill="#f0f0f0"/>
<rect x="1447.9" y="264.8" width="30" height="22.5" fill="#6a6a6a"/><rect x="1449.4" y="266.3" width="25.7" height="18.2" fill="#a3a3a3"/><rect x="1449.4" y="266.3" width="24.0" height="16.5" fill="#ffffff"/><rect x="1451.3000000000002" y="268.2" width="22.1" height="14.6" fill="#f0f0f0"/>
<rect x="1447.9" y="361.0" width="30" height="22.5" fill="#6a6a6a"/><rect x="1449.4" y="362.5" width="25.7" height="18.2" fill="#a3a3a3"/><rect x="1449.4" y="362.5" width="24.0" height="16.5" fill="#ffffff"/><rect x="1451.3000000000002" y="364.4" width="22.1" height="14.6" fill="#f0f0f0"/>
</svg>
<div id="txt">
<div class="t b" id="motor1" style="left:42.21px;top:56.50px;font-size:20.6px;letter-spacing:-0.500px">Motor 1</div>
<div class="t b" id="motor2" style="left:42.21px;top:86.50px;font-size:20.6px;letter-spacing:-0.212px">Motor 2</div>
<div class="t b" id="motor3" style="left:42.21px;top:116.50px;font-size:20.6px;letter-spacing:-0.206px">Motor 3</div>
<div class="t b" id="display" style="left:13.31px;top:215.40px;font-size:20.6px;letter-spacing:0.378px">Display:</div>
<div class="t b" id="target" style="left:44.05px;top:243.50px;font-size:20.6px;letter-spacing:-0.259px">Target</div>
<div class="t b" id="feedback" style="left:43.31px;top:273.60px;font-size:20.6px;letter-spacing:-0.126px">Feedback</div>
<div class="t b" id="pwm" style="left:43.31px;top:303.60px;font-size:20.6px;letter-spacing:1.593px">PWM</div>
<div class="t b" id="mlimits" style="left:43.31px;top:333.71px;font-size:20.6px;letter-spacing:-0.145px">Motor Limits</div>
<div class="t b" id="iclip" style="left:43.42px;top:363.71px;font-size:20.6px;letter-spacing:-0.290px">Input Clipping</div>
<div class="t b" id="outmode" style="left:13.92px;top:530.40px;font-size:20.6px;letter-spacing:-0.178px">Out Mode:</div>
<div class="t b" id="monitor" style="left:42.21px;top:558.90px;font-size:20.6px;letter-spacing:-0.229px">Monitor</div>
<div class="t b" id="square" style="left:43.22px;top:588.81px;font-size:20.6px;letter-spacing:-0.441px">Square</div>
<div class="t b" id="triangle" style="left:43.05px;top:618.90px;font-size:20.6px;letter-spacing:-0.162px">Triangle</div>
<div class="t b" id="sine" style="left:43.33px;top:648.70px;font-size:20.6px;letter-spacing:-0.331px">Sine</div>
<div class="t b" id="motion" style="left:42.21px;top:678.90px;font-size:20.6px;letter-spacing:-0.196px">Motion</div>
<div class="t b" id="manual" style="left:42.21px;top:708.90px;font-size:20.6px;letter-spacing:0.362px">Manual</div>
<div class="t b" id="udp" style="left:42.47px;top:739.10px;font-size:20.6px;letter-spacing:-0.005px">UDP Pass thru</div>
<div class="t b" id="pks" style="left:43.67px;top:770.60px;font-size:20.6px;letter-spacing:0.102px">pks/sec = 0</div>
<div class="t b" id="step" style="left:239.35px;top:590.40px;font-size:20.6px;letter-spacing:-0.563px">Step</div>
<div class="t b" id="stepv" style="left:250.41px;top:620.40px;font-size:20.6px;letter-spacing:0.000px">1</div>
<div class="t b" id="fpid" style="left:396.21px;top:560.60px;font-size:20.6px;letter-spacing:-0.328px">Fpid / 1</div>
<div class="t b" id="kp" style="left:396.21px;top:598.10px;font-size:20.6px;letter-spacing:-0.307px">Kp = 451</div>
<div class="t b" id="ki" style="left:396.21px;top:635.60px;font-size:20.6px;letter-spacing:0.098px">Ki = 10</div>
<div class="t b" id="kd" style="left:396.21px;top:673.10px;font-size:20.6px;letter-spacing:-0.656px">Kd = 1</div>
<div class="t b" id="ks" style="left:396.21px;top:710.60px;font-size:20.6px;letter-spacing:-0.429px">Ks = 1</div>
<div class="t b" id="status" style="left:289.02px;top:823.21px;font-size:20.6px;letter-spacing:-0.048px">SMC3 settings loaded</div>
<div class="t m" id="fpwm" style="left:726.40px;top:560.40px;font-size:20.6px;letter-spacing:0.407px">Fpwm = 35kHz</div>
<div class="t m" id="pwmmin" style="left:726.40px;top:597.90px;font-size:20.6px;letter-spacing:0.629px">PWMmin = 0</div>
<div class="t m" id="pwmmax" style="left:726.40px;top:635.50px;font-size:20.6px;letter-spacing:0.663px">PWMmax = 200</div>
<div class="t m" id="pwmrev" style="left:726.40px;top:673.10px;font-size:20.6px;letter-spacing:0.629px">PWMrev = 2</div>
<div class="t m" id="tx" style="left:727.18px;top:748.00px;font-size:20.6px;letter-spacing:0.281px">Tx: [ A 02 61 ]</div>
<div class="t m" id="rx" style="left:726.22px;top:785.60px;font-size:20.6px;letter-spacing:0.528px">Rx: [ a 01 00 ]</div>
<div class="t m" id="calcs" style="left:726.84px;top:823.10px;font-size:20.6px;letter-spacing:0.427px">Calcs/sec = 0</div>
<div class="t b" id="maxlim" style="left:1123.74px;top:560.40px;font-size:20.6px;letter-spacing:0.217px">Max Limits = 54</div>
<div class="t b" id="clipin" style="left:1123.99px;top:597.90px;font-size:20.6px;letter-spacing:-0.095px">Clip Input = 115</div>
<div class="t b" id="deadz" style="left:1123.74px;top:635.50px;font-size:20.6px;letter-spacing:0.315px">Deadzone = 0</div>
<div class="t b" id="ardu" style="left:1123.18px;top:710.60px;font-size:20.6px;letter-spacing:-0.078px">Arduino SMC3 ver 2.00</div>
<div class="t b" id="winu" style="left:1123.78px;top:747.90px;font-size:20.6px;letter-spacing:0.112px">Windows Utility ver 1.00</div>
<div class="t b" id="udpp" style="left:1123.74px;top:785.60px;font-size:20.6px;letter-spacing:0.063px">UDP Port 20017</div>
<div class="t b" id="comm" style="left:1123.99px;top:823.21px;font-size:20.6px;letter-spacing:-0.414px">Comm Port 5</div>
<div class="t r" id="off" style="left:152.06px;top:54.90px;font-size:20.6px;letter-spacing:-0.848px">OFF</div>
<div class="t r" id="on2" style="left:156.72px;top:85.00px;font-size:20.6px;letter-spacing:-0.889px">ON</div>
<div class="t r" id="on3" style="left:156.72px;top:114.90px;font-size:20.6px;letter-spacing:-0.889px">ON</div>
<div class="t b" id="saveimg" style="left:45.57px;top:419.60px;font-size:20.6px;letter-spacing:0.243px">Save Image</div>
<div class="t b" id="save" style="left:251.05px;top:788.40px;font-size:20.6px;letter-spacing:0.285px">Save</div>
<div class="t b" id="load" style="left:327.39px;top:788.40px;font-size:20.6px;letter-spacing:-0.209px">Load</div>
<div class="t b" id="m2" style="left:447.39px;top:788.40px;font-size:20.6px;letter-spacing:0.539px">-&gt; M2</div>
<div class="t b" id="m3" style="left:522.87px;top:788.40px;font-size:20.6px;letter-spacing:0.606px">-&gt; M3</div>
<div class="g gm" id="a0m" style="left:524.00px;top:559.77px">-</div>
<div class="g gp" id="a0p" style="left:557.00px;top:560.95px">+</div>
<div class="g gm" id="a1m" style="left:524.00px;top:597.27px">-</div>
<div class="g gp" id="a1p" style="left:557.00px;top:598.45px">+</div>
<div class="g gm" id="a2m" style="left:524.00px;top:634.77px">-</div>
<div class="g gp" id="a2p" style="left:557.00px;top:635.95px">+</div>
<div class="g gm" id="a3m" style="left:524.00px;top:672.27px">-</div>
<div class="g gp" id="a3p" style="left:557.00px;top:673.45px">+</div>
<div class="g gm" id="a4m" style="left:524.00px;top:709.77px">-</div>
<div class="g gp" id="a4p" style="left:557.00px;top:710.95px">+</div>
<div class="g gm" id="b0m" style="left:921.50px;top:559.77px">-</div>
<div class="g gp" id="b0p" style="left:954.40px;top:560.95px">+</div>
<div class="g gm" id="b1m" style="left:921.50px;top:597.27px">-</div>
<div class="g gp" id="b1p" style="left:954.40px;top:598.45px">+</div>
<div class="g gm" id="b2m" style="left:921.50px;top:634.77px">-</div>
<div class="g gp" id="b2p" style="left:954.40px;top:635.95px">+</div>
<div class="g gm" id="b3m" style="left:921.50px;top:672.27px">-</div>
<div class="g gp" id="b3p" style="left:954.40px;top:673.45px">+</div>
<div class="g gm" id="c0m" style="left:1330.90px;top:559.77px">-</div>
<div class="g gp" id="c0p" style="left:1364.30px;top:560.95px">+</div>
<div class="g gm" id="c1m" style="left:1330.90px;top:597.27px">-</div>
<div class="g gp" id="c1p" style="left:1364.30px;top:598.45px">+</div>
<div class="g gm" id="c2m" style="left:1330.90px;top:634.77px">-</div>
<div class="g gp" id="c2p" style="left:1364.30px;top:635.95px">+</div>
<div class="g gm" id="d0m" style="left:1448.10px;top:168.27px">-</div>
<div class="g gm" id="d1m" style="left:1448.10px;top:264.27px">-</div>
<div class="g gm" id="d2m" style="left:1448.10px;top:360.07px">-</div>
<div class="g gp" id="stepp" style="left:246.10px;top:563.30px">+</div>
<div class="g gm" id="stepm" style="left:246.50px;top:652.62px">-</div>
</div></div>
</body></html>
